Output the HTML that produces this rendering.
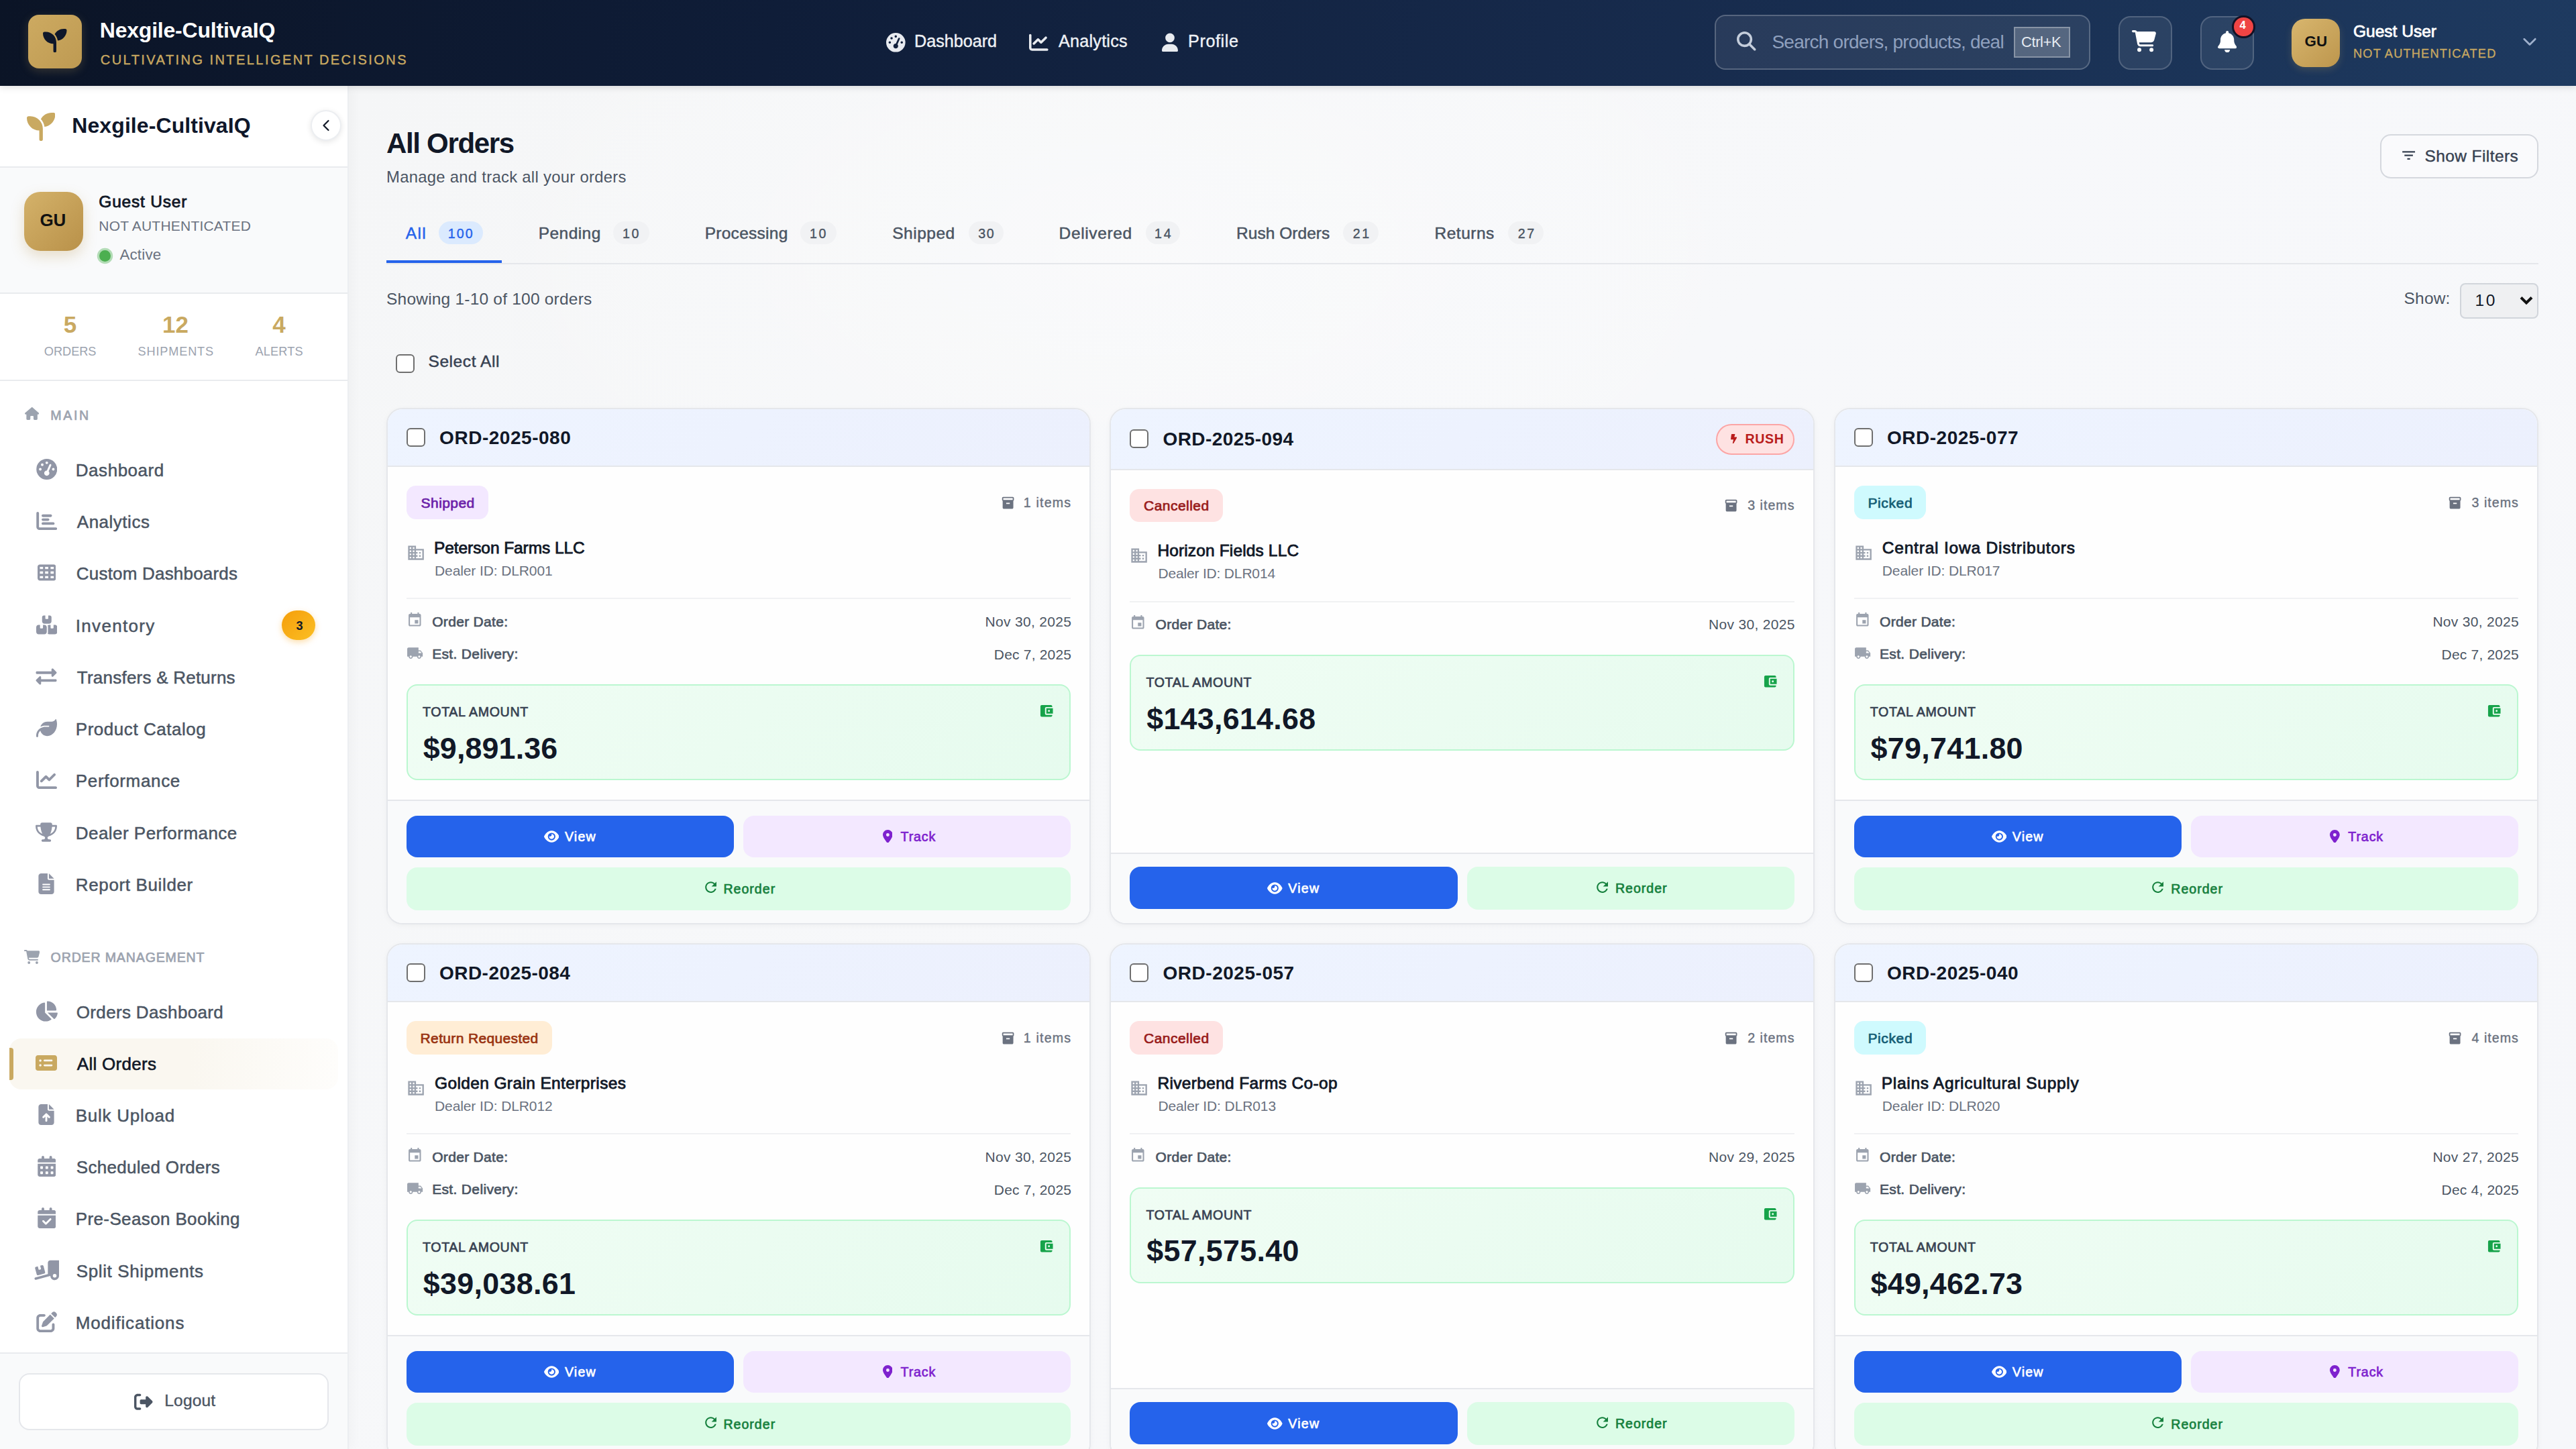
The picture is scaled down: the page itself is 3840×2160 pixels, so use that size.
<!DOCTYPE html>
<html lang="en"><head><meta charset="utf-8"><title>All Orders - Nexgile-CultivaIQ</title>
<style>
*{margin:0;padding:0}
html,body{width:3840px;height:2160px;overflow:hidden;background:#f7f8fa}
body{position:relative;font-family:"Liberation Sans",sans-serif;-webkit-font-smoothing:antialiased}
body div,body svg.ic,body span.t{position:absolute}
span.t{white-space:pre;line-height:1;display:block}
.main-bg{left:518px;top:128px;width:3322px;height:2032px;background:
 radial-gradient(ellipse 1500px 800px at 35% 12%,rgba(255,255,255,.35),rgba(255,255,255,0) 70%),
 linear-gradient(135deg,#f5f6f7 0%,#f7f8fa 45%,#f6f7fa 100%)}
.sidebar{left:0;top:128px;width:518px;height:2032px;background:#fff;border-right:2px solid #eceef1;box-shadow:4px 0 16px rgba(0,0,0,.03)}
.header{left:0;top:0;width:3840px;height:128px;background:linear-gradient(100deg,#0b1426 0%,#0f1d38 30%,#16294a 60%,#1e3a60 100%);box-shadow:0 2px 10px rgba(0,0,0,.13)}
.card{border:2px solid #e5e7eb;border-radius:24px;background:#fefefe;box-sizing:border-box;box-shadow:0 2px 8px rgba(0,0,0,.04)}
.card-hd{border-radius:22px 22px 0 0;background:linear-gradient(135deg,#eef4ff 0%,#ecf0fd 100%)}
.card-ft{border-top:2px solid #e5e7eb;background:#f9fafb;border-radius:0 0 22px 22px;box-sizing:border-box}
.amt{border:2px solid #bbf7d0;border-radius:16px;background:linear-gradient(135deg,#f0fdf4 0%,#e6fbee 100%);box-sizing:border-box}
.btn{border-radius:16px}
</style></head>
<body>
<div class="main-bg"></div>
<div class="sidebar"></div>
<div style="left:0;top:248px;width:518px;height:190px;background:#f9fafb;border-top:2px solid #e9ebee;border-bottom:2px solid #e9ebee;box-sizing:border-box"></div>
<aside>
<svg class="ic" style="left:39.8px;top:167.7px;width:42.4px;height:42.4px;" viewBox="0 0 512 512" preserveAspectRatio="xMidYMid meet"><path fill="#c9a961" fill-rule="nonzero" d="M512 32c0 113.600-84.600 207.500-194.200 222c-7.100-53.400-30.600-101.600-65.300-139.300C290.800 46.300 364 0 448 0h32c17.700 0 32 14.300 32 32zM0 96C0 78.300 14.300 64 32 64H64c123.700 0 224 100.300 224 224v32V480c0 17.700-14.300 32-32 32s-32-14.300-32-32V320C100.300 320 0 219.700 0 96z"/></svg>
<span class="t" style="left:107.30px;top:171.21px;font-size:32px;color:#0f172a;font-weight:700;letter-spacing:0.084px;">Nexgile-CultivaIQ</span>
<div style="left:463px;top:164px;width:46px;height:46px;border-radius:50%;background:#fff;border:2px solid #eceef1;box-shadow:0 2px 8px rgba(0,0,0,.10);box-sizing:border-box"></div>
<svg class="ic" style="left:479px;top:177px;width:14px;height:20px" viewBox="0 0 14 20"><path d="M10.5 3 L3.5 10 L10.5 17" fill="none" stroke="#111827" stroke-width="2.2" stroke-linecap="round" stroke-linejoin="round"/></svg>
<div style="left:36px;top:286px;width:88px;height:88px;border-radius:24px;background:linear-gradient(135deg,#d4b26a 0%,#b99149 100%);box-shadow:0 8px 20px rgba(180,140,60,.25)"></div>
<span class="t" style="left:59.40px;top:314.99px;font-size:26px;color:#111111;font-weight:700;letter-spacing:-0.224px;">GU</span>
<span class="t" style="left:147.30px;top:288.86px;font-size:24.5px;color:#111827;letter-spacing:0.807px;-webkit-text-stroke:0.83px #111827;">Guest User</span>
<span class="t" style="left:147.30px;top:326.12px;font-size:21px;color:#6b7280;letter-spacing:0.212px;">NOT AUTHENTICATED</span>
<div style="left:147.8px;top:373.2px;width:16.8px;height:16.8px;border-radius:50%;background:#4caf50;box-shadow:0 0 0 3.2px rgba(76,175,80,.40)"></div>
<span class="t" style="left:178.40px;top:368.84px;font-size:22.4px;color:#6b7280;letter-spacing:0.176px;">Active</span>
<span class="t" style="left:94.80px;top:466.37px;font-size:35px;color:#c9a961;font-weight:700;">5</span>
<span class="t" style="left:242.07px;top:466.37px;font-size:35px;color:#c9a961;font-weight:700;">12</span>
<span class="t" style="left:406.20px;top:466.37px;font-size:35px;color:#c9a961;font-weight:700;">4</span>
<span class="t" style="left:65.85px;top:514.59px;font-size:18.2px;color:#9ca3af;letter-spacing:-0.036px;">ORDERS</span>
<span class="t" style="left:205.55px;top:514.59px;font-size:18.2px;color:#9ca3af;letter-spacing:0.816px;">SHIPMENTS</span>
<span class="t" style="left:380.60px;top:514.59px;font-size:18.2px;color:#9ca3af;letter-spacing:0.102px;">ALERTS</span>
<div style="left:0;top:566px;width:518px;height:2px;background:#e9ebee"></div>
<svg class="ic" style="left:36.8px;top:606px;width:21.2px;height:21px;" viewBox="0 0 576 512" preserveAspectRatio="xMidYMid meet"><path fill="#9ca3af" fill-rule="nonzero" d="M575.800 255.500c0 18-15 32.100-32 32.100h-32l.7 160.200c0 2.700-.2 5.400-.5 8.100V472c0 22.100-17.900 40-40 40H456c-1.100 0-2.200 0-3.300-.1c-1.400 .1-2.800 .1-4.200 .1H416 392c-22.100 0-40-17.900-40-40V448 384c0-17.700-14.300-32-32-32H256c-17.700 0-32 14.300-32 32v64 24c0 22.100-17.900 40-40 40H160 128.100c-1.500 0-3-.1-4.500-.2c-1.200 .1-2.400 .2-3.600 .2H104c-22.100 0-40-17.900-40-40V360c0-.9 0-1.900 .1-2.800V287.600H32c-18 0-32-14-32-32.100c0-9 3-17 10-24L266.400 8c7-7 15-8 22-8s15 2 21 7L564.800 231.500c8 7 12 15 11 24z"/></svg>
<span class="t" style="left:75.30px;top:609.71px;font-size:19.6px;color:#9ca3af;letter-spacing:2.622px;-webkit-text-stroke:0.67px #9ca3af;">MAIN</span>
<svg class="ic" style="left:53.55px;top:683.8px;width:31.5px;height:31px;" viewBox="0 0 512 512" preserveAspectRatio="xMidYMid meet"><path fill="#9196a6" fill-rule="nonzero" d="M0 256a256 256 0 1 1 512 0A256 256 0 1 1 0 256zM288 96a32 32 0 1 0 -64 0 32 32 0 1 0 64 0zM256 416c35.300 0 64-28.700 64-64c0-17.400-6.900-33.100-18.100-44.600L366 161.700c5.300-12.100-.2-26.300-12.300-31.600s-26.300 .2-31.600 12.300L257.900 288c-.6 0-1.300 0-1.900 0c-35.300 0-64 28.700-64 64s28.700 64 64 64zM176 144a32 32 0 1 0 -64 0 32 32 0 1 0 64 0zM96 288a32 32 0 1 0 0-64 32 32 0 1 0 0 64zm352-32a32 32 0 1 0 -64 0 32 32 0 1 0 64 0z"/></svg>
<span class="t" style="left:112.80px;top:687.89px;font-size:26px;color:#4b5563;letter-spacing:0.533px;-webkit-text-stroke:0.5px #4b5563;">Dashboard</span>
<svg class="ic" style="left:53.55px;top:761.05px;width:31.5px;height:31px;" viewBox="0 0 512 512" preserveAspectRatio="xMidYMid meet"><path fill="#9196a6" fill-rule="nonzero" d="M32 32c17.700 0 32 14.300 32 32V400c0 8.800 7.200 16 16 16H480c17.700 0 32 14.300 32 32s-14.300 32-32 32H80c-44.200 0-80-35.800-80-80V64C0 46.300 14.300 32 32 32zm96 96c0-17.700 14.300-32 32-32l192 0c17.700 0 32 14.300 32 32s-14.300 32-32 32l-192 0c-17.700 0-32-14.300-32-32zm32 64H288c17.700 0 32 14.300 32 32s-14.300 32-32 32H160c-17.700 0-32-14.300-32-32s14.300-32 32-32zm0 96H416c17.700 0 32 14.300 32 32s-14.300 32-32 32H160c-17.700 0-32-14.300-32-32s14.300-32 32-32z"/></svg>
<span class="t" style="left:114.80px;top:765.14px;font-size:26px;color:#4b5563;letter-spacing:0.508px;-webkit-text-stroke:0.5px #4b5563;">Analytics</span>
<svg class="ic" style="left:55.5px;top:838.3px;width:27.6px;height:31px;" viewBox="0 0 512 512" preserveAspectRatio="xMidYMid meet"><path fill="#9196a6" fill-rule="nonzero" d="M64 32C28.700 32 0 60.700 0 96V416c0 35.300 28.700 64 64 64H448c35.300 0 64-28.700 64-64V96c0-35.300-28.700-64-64-64H64zm88 64v64H64V96h88zm56 0h88v64H208V96zm240 0v64H360V96h88zM64 224h88v64H64V224zm232 0v64H208V224h88zm64 0h88v64H360V224zM152 352v64H64V352h88zm56 0h88v64H208V352zm240 0v64H360V352h88z"/></svg>
<span class="t" style="left:113.80px;top:842.39px;font-size:26px;color:#4b5563;letter-spacing:0.200px;-webkit-text-stroke:0.5px #4b5563;">Custom Dashboards</span>
<svg class="ic" style="left:53.55px;top:915.55px;width:31.5px;height:31px;" viewBox="0 0 576 512" preserveAspectRatio="xMidYMid meet"><path fill="#9196a6" fill-rule="nonzero" d="M248 0H208c-26.500 0-48 21.500-48 48V160c0 35.300 28.700 64 64 64H352c35.300 0 64-28.700 64-64V48c0-26.500-21.500-48-48-48H328V80c0 8.800-7.200 16-16 16H264c-8.800 0-16-7.200-16-16V0zM64 256c-35.300 0-64 28.700-64 64V448c0 35.300 28.700 64 64 64H224c35.300 0 64-28.700 64-64V320c0-35.300-28.700-64-64-64H184v80c0 8.800-7.200 16-16 16H120c-8.800 0-16-7.200-16-16V256H64zM352 512H512c35.300 0 64-28.700 64-64V320c0-35.300-28.700-64-64-64H472v80c0 8.800-7.200 16-16 16H408c-8.800 0-16-7.200-16-16V256H352c-15 0-28.800 5.100-39.700 13.800c4.900 10.400 7.700 22 7.700 34.200V464c0 12.200-2.800 23.800-7.700 34.200C323.200 506.900 337 512 352 512z"/></svg>
<span class="t" style="left:112.80px;top:919.64px;font-size:26px;color:#4b5563;letter-spacing:1.307px;-webkit-text-stroke:0.5px #4b5563;">Inventory</span>
<svg class="ic" style="left:53.3px;top:992.8px;width:32px;height:31px;" viewBox="0 0 512 512" preserveAspectRatio="xMidYMid meet"><path fill="#9196a6" fill-rule="nonzero" d="M0 168v-16c0-13.255 10.745-24 24-24h360V80c0-21.367 25.899-32.042 40.971-16.971l80 80c9.372 9.373 9.372 24.569 0 33.941l-80 80C409.956 271.982 384 261.456 384 240v-48H24c-13.255 0-24-10.745-24-24zm488 152H128v-48c0-21.314-25.862-32.080-40.971-16.971l-80 80c-9.372 9.373-9.372 24.569 0 33.941l80 80C102.057 463.997 128 453.437 128 432v-48h360c13.255 0 24-10.745 24-24v-16c0-13.255-10.745-24-24-24z"/></svg>
<span class="t" style="left:114.80px;top:996.89px;font-size:26px;color:#4b5563;letter-spacing:0.230px;-webkit-text-stroke:0.5px #4b5563;">Transfers &amp; Returns</span>
<svg class="ic" style="left:53.8px;top:1070.05px;width:31px;height:31px;" viewBox="0 0 512 512" preserveAspectRatio="xMidYMid meet"><path fill="#9196a6" fill-rule="nonzero" d="M272 96c-78.600 0-145.100 51.500-167.700 122.500c33.600-17 71.500-26.500 111.700-26.500h88c8.800 0 16 7.200 16 16s-7.200 16-16 16H288 216s0 0 0 0c-16.600 0-32.700 1.900-48.300 5.400c-25.900 5.900-49.900 16.400-71.400 30.700c0 0 0 0 0 0C38.300 298.800 0 364.900 0 440v16c0 13.300 10.700 24 24 24s24-10.700 24-24V440c0-48.700 20.700-92.500 53.800-123.200C121.600 392.300 190.300 448 272 448l1 0c132.100-.7 239-130.900 239-291.400c0-42.600-7.500-83.100-21.100-119.600c-2.600-6.900-12.700-6.600-16.200-.1C455.900 72.100 418.700 96 376 96L272 96z"/></svg>
<span class="t" style="left:112.80px;top:1074.14px;font-size:26px;color:#4b5563;letter-spacing:0.537px;-webkit-text-stroke:0.5px #4b5563;">Product Catalog</span>
<svg class="ic" style="left:53.8px;top:1147.3px;width:31px;height:31px;" viewBox="0 0 512 512" preserveAspectRatio="xMidYMid meet"><path fill="#9196a6" fill-rule="nonzero" d="M64 64c0-17.700-14.300-32-32-32S0 46.300 0 64V400c0 44.200 35.800 80 80 80H480c17.700 0 32-14.300 32-32s-14.300-32-32-32H80c-8.800 0-16-7.200-16-16V64zm406.600 86.600c12.500-12.500 12.500-32.800 0-45.300s-32.800-12.500-45.300 0L320 210.700l-57.400-57.400c-12.500-12.500-32.800-12.500-45.300 0l-112 112c-12.500 12.500-12.500 32.800 0 45.300s32.800 12.500 45.300 0L240 221.300l57.400 57.400c12.500 12.500 32.800 12.500 45.300 0l128-128z"/></svg>
<span class="t" style="left:112.80px;top:1151.39px;font-size:26px;color:#4b5563;letter-spacing:0.662px;-webkit-text-stroke:0.5px #4b5563;">Performance</span>
<svg class="ic" style="left:53.3px;top:1224.55px;width:32px;height:31px;" viewBox="0 0 576 512" preserveAspectRatio="xMidYMid meet"><path fill="#9196a6" fill-rule="nonzero" d="M400 0H176c-26.500 0-48.100 21.800-47.100 48.200c.2 5.300 .4 10.600 .7 15.800H24C10.700 64 0 74.700 0 88c0 92.600 33.500 157 78.500 200.700c44.300 43.100 98.300 64.800 138.100 75.800c23.400 6.500 39.400 26 39.400 45.600c0 20.900-17 37.900-37.900 37.900H192c-17.700 0-32 14.300-32 32s14.300 32 32 32H384c17.700 0 32-14.300 32-32s-14.300-32-32-32H357.900C337 448 320 431 320 410.100c0-19.600 15.900-39.200 39.400-45.600c39.900-11 93.900-32.700 138.200-75.800C542.500 245 576 180.600 576 88c0-13.300-10.700-24-24-24H446.400c.3-5.200 .5-10.400 .7-15.800C448.100 21.800 426.500 0 400 0zM48.900 112h84.400c9.100 90.100 29.200 150.300 51.900 190.600c-24.900-11-50.800-26.500-73.200-48.300c-32-31.100-58-76-63-142.300zM464.100 254.300c-22.400 21.800-48.300 37.300-73.200 48.300c22.700-40.300 42.800-100.500 51.900-190.600h84.400c-5.100 66.300-31.100 111.200-63 142.300z"/></svg>
<span class="t" style="left:112.80px;top:1228.64px;font-size:26px;color:#4b5563;letter-spacing:0.459px;-webkit-text-stroke:0.5px #4b5563;">Dealer Performance</span>
<svg class="ic" style="left:57.3px;top:1301.8px;width:24px;height:31px;" viewBox="0 0 384 512" preserveAspectRatio="xMidYMid meet"><path fill="#9196a6" fill-rule="nonzero" d="M64 0C28.700 0 0 28.700 0 64V448c0 35.300 28.700 64 64 64H320c35.300 0 64-28.700 64-64V160H256c-17.700 0-32-14.300-32-32V0H64zM256 0V128H384L256 0zM112 256H272c8.800 0 16 7.200 16 16s-7.200 16-16 16H112c-8.800 0-16-7.200-16-16s7.200-16 16-16zm0 64H272c8.800 0 16 7.200 16 16s-7.200 16-16 16H112c-8.800 0-16-7.200-16-16s7.200-16 16-16zm0 64H272c8.800 0 16 7.200 16 16s-7.200 16-16 16H112c-8.800 0-16-7.200-16-16s7.200-16 16-16z"/></svg>
<span class="t" style="left:112.80px;top:1305.89px;font-size:26px;color:#4b5563;letter-spacing:0.636px;-webkit-text-stroke:0.5px #4b5563;">Report Builder</span>
<div style="left:420.2px;top:910px;width:49.7px;height:43.7px;border-radius:22px;background:linear-gradient(135deg,#f59e0b,#fbbf24);box-shadow:0 3px 10px rgba(245,158,11,.35)"></div>
<span class="t" style="left:441.50px;top:923.79px;font-size:18.2px;color:#111827;font-weight:700;">3</span>
<svg class="ic" style="left:35.5px;top:1416px;width:23.5px;height:21px;" viewBox="0 0 576 512" preserveAspectRatio="xMidYMid meet"><path fill="#9ca3af" fill-rule="nonzero" d="M0 24C0 10.700 10.700 0 24 0H69.500c22 0 41.500 12.800 50.600 32h411c26.300 0 45.500 25 38.600 50.400l-41 152.300c-8.500 31.400-37 53.300-69.500 53.300H170.700l5.400 28.500c2.200 11.300 12.100 19.500 23.600 19.500H488c13.300 0 24 10.700 24 24s-10.700 24-24 24H199.700c-34.600 0-64.300-24.600-70.700-58.500L77.400 54.500c-.7-3.800-4-6.500-7.900-6.500H24C10.700 48 0 37.300 0 24zM128 464a48 48 0 1 1 96 0 48 48 0 1 1 -96 0zm336-48a48 48 0 1 1 0 96 48 48 0 1 1 0-96z"/></svg>
<span class="t" style="left:75.60px;top:1417.61px;font-size:19.6px;color:#9ca3af;letter-spacing:0.822px;-webkit-text-stroke:0.67px #9ca3af;">ORDER MANAGEMENT</span>
<svg class="ic" style="left:52.3px;top:1492px;width:34px;height:31px;" viewBox="0 0 576 512" preserveAspectRatio="xMidYMid meet"><path fill="#9196a6" fill-rule="nonzero" d="M304 240V16.600c0-9 7-16.600 16-16.600C443.700 0 544 100.300 544 224c0 9-7.600 16-16.600 16H304zM32 272C32 150.700 122.100 50.300 239 34.300c9.200-1.300 17 6.100 17 15.400V288L412.500 444.500c6.700 6.700 6.200 17.700-1.500 23.100C371.800 495.600 323.800 512 272 512C139.500 512 32 404.600 32 272zm526.400 16c9.300 0 16.600 7.800 15.400 17c-7.700 55.900-34.600 105.600-73.900 142.300c-6 5.600-15.400 5.200-21.200-.7L320 288H558.400z"/></svg>
<span class="t" style="left:113.80px;top:1496.09px;font-size:26px;color:#4b5563;letter-spacing:0.339px;-webkit-text-stroke:0.5px #4b5563;">Orders Dashboard</span>
<div style="left:14px;top:1548px;width:490px;height:76px;border-radius:18px;background:linear-gradient(90deg,#faf7f0 0%,#faf7f0 55%,#fefdfb 100%)"></div>
<div style="left:14px;top:1561.9px;width:6px;height:48px;border-radius:0 4px 4px 0;background:#c9a961"></div>
<svg class="ic" style="left:53.3px;top:1569.1px;width:32px;height:31px;" viewBox="0 0 576 512" preserveAspectRatio="xMidYMid meet"><path fill="#c9a961" fill-rule="evenodd" d="M64 48H512c35.3 0 64 28.7 64 64V400c0 35.3-28.7 64-64 64H64c-35.3 0-64-28.7-64-64V112C0 76.7 28.7 48 64 48zM128 160a32 32 0 1 0 0 64 32 32 0 1 0 0-64zM128 288a32 32 0 1 0 0 64 32 32 0 1 0 0-64zM240 168a24 24 0 0 0 0 48H432a24 24 0 0 0 0-48H240zM240 296a24 24 0 0 0 0 48H432a24 24 0 0 0 0-48H240z"/></svg>
<span class="t" style="left:114.80px;top:1573.19px;font-size:26px;color:#111827;letter-spacing:0.291px;-webkit-text-stroke:0.6px #111827;">All Orders</span>
<svg class="ic" style="left:57.3px;top:1646.2px;width:24px;height:31px;" viewBox="0 0 384 512" preserveAspectRatio="xMidYMid meet"><path fill="#9196a6" fill-rule="nonzero" d="M64 0C28.700 0 0 28.700 0 64V448c0 35.300 28.700 64 64 64H320c35.300 0 64-28.700 64-64V160H256c-17.700 0-32-14.300-32-32V0H64zM256 0V128H384L256 0zM216 408c0 13.300-10.700 24-24 24s-24-10.700-24-24V305.900l-31 31c-9.400 9.400-24.600 9.400-33.900 0s-9.400-24.600 0-33.900l72-72c9.400-9.400 24.600-9.400 33.900 0l72 72c9.400 9.400 9.400 24.600 0 33.900s-24.600 9.400-33.900 0l-31-31V408z"/></svg>
<span class="t" style="left:112.80px;top:1650.29px;font-size:26px;color:#4b5563;letter-spacing:0.727px;-webkit-text-stroke:0.5px #4b5563;">Bulk Upload</span>
<svg class="ic" style="left:55.5px;top:1723.3px;width:27.6px;height:31px;" viewBox="0 0 448 512" preserveAspectRatio="xMidYMid meet"><path fill="#9196a6" fill-rule="nonzero" d="M128 0c17.700 0 32 14.300 32 32V64H288V32c0-17.700 14.300-32 32-32s32 14.300 32 32V64h48c26.500 0 48 21.500 48 48v48H0V112C0 85.500 21.500 64 48 64H96V32c0-17.700 14.300-32 32-32zM0 192H448V464c0 26.500-21.500 48-48 48H48c-26.500 0-48-21.500-48-48V192zm64 80v32c0 8.800 7.200 16 16 16h32c8.800 0 16-7.200 16-16V272c0-8.800-7.200-16-16-16H80c-8.800 0-16 7.200-16 16zm128 0v32c0 8.800 7.200 16 16 16h32c8.800 0 16-7.200 16-16V272c0-8.800-7.200-16-16-16H208c-8.800 0-16 7.200-16 16zm144-16c-8.800 0-16 7.200-16 16v32c0 8.800 7.200 16 16 16h32c8.800 0 16-7.200 16-16V272c0-8.800-7.200-16-16-16H336zM64 400v32c0 8.800 7.200 16 16 16h32c8.800 0 16-7.200 16-16V400c0-8.800-7.200-16-16-16H80c-8.800 0-16 7.200-16 16zm144-16c-8.800 0-16 7.200-16 16v32c0 8.800 7.200 16 16 16h32c8.800 0 16-7.200 16-16V400c0-8.800-7.200-16-16-16H208zm112 16v32c0 8.800 7.200 16 16 16h32c8.800 0 16-7.200 16-16V400c0-8.800-7.200-16-16-16H336c-8.800 0-16 7.200-16 16z"/></svg>
<span class="t" style="left:113.80px;top:1727.39px;font-size:26px;color:#4b5563;letter-spacing:0.296px;-webkit-text-stroke:0.5px #4b5563;">Scheduled Orders</span>
<svg class="ic" style="left:55.5px;top:1800.4px;width:27.6px;height:31px;" viewBox="0 0 448 512" preserveAspectRatio="xMidYMid meet"><path fill="#9196a6" fill-rule="nonzero" d="M128 0c17.700 0 32 14.300 32 32V64H288V32c0-17.700 14.300-32 32-32s32 14.300 32 32V64h48c26.500 0 48 21.500 48 48v48H0V112C0 85.500 21.500 64 48 64H96V32c0-17.700 14.300-32 32-32zM0 192H448V464c0 26.500-21.500 48-48 48H48c-26.500 0-48-21.500-48-48V192zM329 305c9.400-9.400 9.400-24.600 0-33.900s-24.600-9.400-33.900 0l-95 95-47-47c-9.400-9.400-24.600-9.400-33.900 0s-9.400 24.600 0 33.900l64 64c9.400 9.400 24.600 9.400 33.900 0L329 305z"/></svg>
<span class="t" style="left:112.80px;top:1804.49px;font-size:26px;color:#4b5563;letter-spacing:0.369px;-webkit-text-stroke:0.5px #4b5563;">Pre-Season Booking</span>
<svg class="ic" style="left:50.8px;top:1877.5px;width:37px;height:31px;" viewBox="0 0 640 512" preserveAspectRatio="xMidYMid meet"><path fill="#9196a6" fill-rule="nonzero" d="M640 0V400c0 61.900-50.100 112-112 112c-61 0-110.500-48.700-112-109.300L48.400 502.900c-17.100 4.600-34.600-5.400-39.300-22.500s5.400-34.600 22.500-39.300L352 353.800V64c0-35.300 28.700-64 64-64H640zM576 400a48 48 0 1 0 -96 0 48 48 0 1 0 96 0zM23.100 207.700c-4.600-17.100 5.600-34.600 22.600-39.200l46.400-12.400 20.700 77.300c2.300 8.500 11.100 13.600 19.600 11.300l30.900-8.300c8.500-2.300 13.600-11.100 11.300-19.600l-20.700-77.300 46.400-12.400c17.100-4.600 34.600 5.600 39.200 22.600l41.400 154.500c4.600 17.100-5.600 34.600-22.600 39.200L103.700 384.900c-17.100 4.600-34.600-5.600-39.200-22.600L23.100 207.700z"/></svg>
<span class="t" style="left:113.80px;top:1881.59px;font-size:26px;color:#4b5563;letter-spacing:0.618px;-webkit-text-stroke:0.5px #4b5563;">Split Shipments</span>
<svg class="ic" style="left:53.55px;top:1954.6px;width:31.5px;height:31px;" viewBox="0 0 512 512" preserveAspectRatio="xMidYMid meet"><path fill="#9196a6" fill-rule="nonzero" d="M471.600 21.700c-21.900-21.900-57.300-21.900-79.200 0L362.300 51.700l97.900 97.900 30.100-30.100c21.900-21.900 21.900-57.300 0-79.200L471.600 21.700zm-299.200 220c-6.100 6.100-10.800 13.600-13.500 21.900l-29.600 88.800c-2.900 8.600-.6 18.100 5.800 24.600s15.900 8.700 24.600 5.800l88.800-29.600c8.200-2.700 15.700-7.400 21.900-13.500L437.700 172.300 339.700 74.300 172.400 241.700zM96 64C43 64 0 107 0 160V416c0 53 43 96 96 96H352c53 0 96-43 96-96V320c0-17.700-14.300-32-32-32s-32 14.300-32 32v96c0 17.700-14.300 32-32 32H96c-17.700 0-32-14.300-32-32V160c0-17.700 14.300-32 32-32h96c17.700 0 32-14.300 32-32s-14.300-32-32-32H96z"/></svg>
<span class="t" style="left:112.80px;top:1958.69px;font-size:26px;color:#4b5563;letter-spacing:0.822px;-webkit-text-stroke:0.5px #4b5563;">Modifications</span>
<div style="left:0;top:2016px;width:518px;height:144px;background:#f9fafb;border-top:2px solid #e9ebee;box-sizing:border-box"></div>
<div style="left:28px;top:2047px;width:462px;height:85px;background:#fff;border:2px solid #e5e7eb;border-radius:16px;box-sizing:border-box"></div>
<svg class="ic" style="left:200px;top:2076px;width:27.5px;height:27.5px;" viewBox="0 0 512 512" preserveAspectRatio="xMidYMid meet"><path fill="#4b5563" fill-rule="nonzero" d="M377.900 105.900L500.700 228.700c7.200 7.200 11.300 17.100 11.300 27.300s-4.100 20.100-11.300 27.300L377.900 406.100c-6.400 6.400-15 9.900-24 9.900c-18.700 0-33.900-15.200-33.900-33.900l0-62.100-128 0c-17.700 0-32-14.300-32-32l0-64c0-17.700 14.300-32 32-32l128 0 0-62.100c0-18.700 15.200-33.900 33.900-33.900c9 0 17.600 3.600 24 9.900zM160 96L96 96c-17.700 0-32 14.300-32 32l0 256c0 17.700 14.300 32 32 32l64 0c17.700 0 32 14.300 32 32s-14.300 32-32 32l-64 0c-53 0-96-43-96-96L0 128C0 75 43 32 96 32l64 0c17.700 0 32 14.300 32 32s-14.300 32-32 32z"/></svg>
<span class="t" style="left:245.30px;top:2075.56px;font-size:24.5px;color:#4b5563;letter-spacing:0.174px;-webkit-text-stroke:0.4px #4b5563;">Logout</span>
</aside>
<main>
<span class="t" style="left:576.00px;top:192.65px;font-size:42px;color:#111827;font-weight:700;letter-spacing:-1.323px;">All Orders</span>
<span class="t" style="left:576.00px;top:251.65px;font-size:23.8px;color:#4b5563;letter-spacing:0.307px;">Manage and track all your orders</span>
<div style="left:3548px;top:200px;width:236px;height:66px;border:2px solid #d5d8de;border-radius:16px;background:rgba(255,255,255,.35);box-sizing:border-box"></div>
<svg class="ic" style="left:3577.6px;top:218.7px;width:25.2px;height:25.2px;" viewBox="0 0 24 24" preserveAspectRatio="xMidYMid meet"><path fill="#374151" fill-rule="nonzero" d="M10 18h4v-2h-4v2zM3 6v2h18V6H3zm3 7h12v-2H6v2z"/></svg>
<span class="t" style="left:3614.50px;top:220.76px;font-size:24.5px;color:#374151;letter-spacing:0.406px;-webkit-text-stroke:0.4px #374151;">Show Filters</span>
<div style="left:576px;top:392px;width:3208px;height:2px;background:#e5e7eb"></div>
<div style="left:576px;top:388px;width:172px;height:4px;background:#2563eb"></div>
<span class="t" style="left:604.70px;top:335.56px;font-size:24.5px;color:#2563eb;letter-spacing:1.408px;-webkit-text-stroke:0.5px #2563eb;">All</span>
<div style="left:653.9px;top:330.2px;width:65.9px;height:33.5px;border-radius:17px;background:#dbeafe"></div>
<span class="t" style="left:667.85px;top:338.81px;font-size:19.6px;color:#2563eb;letter-spacing:2.103px;-webkit-text-stroke:0.4px #2563eb;">100</span>
<span class="t" style="left:802.70px;top:335.56px;font-size:24.5px;color:#4b5563;letter-spacing:0.452px;-webkit-text-stroke:0.5px #4b5563;">Pending</span>
<div style="left:914px;top:330.2px;width:53.5px;height:33.5px;border-radius:17px;background:#f1f2f4"></div>
<span class="t" style="left:927.95px;top:338.81px;font-size:19.6px;color:#4b5563;letter-spacing:2.703px;-webkit-text-stroke:0.4px #4b5563;">10</span>
<span class="t" style="left:1050.70px;top:335.56px;font-size:24.5px;color:#4b5563;letter-spacing:0.270px;-webkit-text-stroke:0.5px #4b5563;">Processing</span>
<div style="left:1193px;top:330.2px;width:53.5px;height:33.5px;border-radius:17px;background:#f1f2f4"></div>
<span class="t" style="left:1206.95px;top:338.81px;font-size:19.6px;color:#4b5563;letter-spacing:2.703px;-webkit-text-stroke:0.4px #4b5563;">10</span>
<span class="t" style="left:1330.20px;top:335.56px;font-size:24.5px;color:#4b5563;letter-spacing:0.519px;-webkit-text-stroke:0.5px #4b5563;">Shipped</span>
<div style="left:1444px;top:330.2px;width:52px;height:33.5px;border-radius:17px;background:#f1f2f4"></div>
<span class="t" style="left:1458.20px;top:338.81px;font-size:19.6px;color:#4b5563;letter-spacing:1.703px;-webkit-text-stroke:0.4px #4b5563;">30</span>
<span class="t" style="left:1578.60px;top:335.56px;font-size:24.5px;color:#4b5563;letter-spacing:0.642px;-webkit-text-stroke:0.5px #4b5563;">Delivered</span>
<div style="left:1708.3px;top:330.2px;width:51.2px;height:33.5px;border-radius:17px;background:#f1f2f4"></div>
<span class="t" style="left:1721.10px;top:338.81px;font-size:19.6px;color:#4b5563;letter-spacing:2.703px;-webkit-text-stroke:0.4px #4b5563;">14</span>
<span class="t" style="left:1843.00px;top:335.56px;font-size:24.5px;color:#4b5563;letter-spacing:0.037px;-webkit-text-stroke:0.5px #4b5563;">Rush Orders</span>
<div style="left:2002px;top:330.2px;width:53px;height:33.5px;border-radius:17px;background:#f1f2f4"></div>
<span class="t" style="left:2016.70px;top:338.81px;font-size:19.6px;color:#4b5563;letter-spacing:2.703px;-webkit-text-stroke:0.4px #4b5563;">21</span>
<span class="t" style="left:2138.60px;top:335.56px;font-size:24.5px;color:#4b5563;letter-spacing:0.477px;-webkit-text-stroke:0.5px #4b5563;">Returns</span>
<div style="left:2248px;top:330.2px;width:53px;height:33.5px;border-radius:17px;background:#f1f2f4"></div>
<span class="t" style="left:2262.70px;top:338.81px;font-size:19.6px;color:#4b5563;letter-spacing:2.703px;-webkit-text-stroke:0.4px #4b5563;">27</span>
<span class="t" style="left:576.00px;top:433.66px;font-size:24.5px;color:#4b5563;letter-spacing:0.210px;">Showing 1-10 of 100 orders</span>
<span class="t" style="left:3583.60px;top:432.76px;font-size:24.5px;color:#4b5563;letter-spacing:0.179px;">Show:</span>
<div style="left:3666.6px;top:422.4px;width:117px;height:52.8px;border:2px solid #d1d5db;border-radius:8px;background:#eff0f2;box-sizing:border-box"></div>
<span class="t" style="left:3689.40px;top:436.26px;font-size:24.5px;color:#111827;letter-spacing:2.774px;">10</span>
<svg class="ic" style="left:3755px;top:440px;width:22px;height:16px" viewBox="0 0 22 16"><path d="M3 3.5 L11 11.5 L19 3.5" fill="none" stroke="#111" stroke-width="4" stroke-linecap="butt" stroke-linejoin="miter"/></svg>
<div style="left:590px;top:527.5px;width:28px;height:28px;border:2.3px solid #6f6f6f;border-radius:6px;background:#fff;box-sizing:border-box"></div>
<span class="t" style="left:638.50px;top:527.26px;font-size:24.5px;color:#374151;letter-spacing:0.568px;-webkit-text-stroke:0.5px #374151;">Select All</span>
<article>
<div class="card" style="left:576px;top:608px;width:1050.3px;height:770px"></div>
<div class="card-hd" style="left:578px;top:610px;width:1046.3px;height:84.3px"></div>
<div style="left:578px;top:694.3px;width:1046.3px;height:2px;background:#e5e7eb"></div>
<div style="left:606px;top:637.65px;width:28px;height:28px;border:2.3px solid #6f6f6f;border-radius:6px;background:#fff;box-sizing:border-box"></div>
<span class="t" style="left:655.10px;top:638.65px;font-size:28px;color:#111827;font-weight:700;letter-spacing:0.527px;">ORD-2025-080</span>
<div style="left:606px;top:724.3px;width:122px;height:49.7px;border-radius:14px;background:#f3e8ff"></div>
<span class="t" style="left:627.60px;top:738.72px;font-size:21px;color:#6b21a8;letter-spacing:0.435px;-webkit-text-stroke:0.71px #6b21a8;">Shipped</span>
<span class="t" style="left:1525.80px;top:740.11px;font-size:19.6px;color:#6b7280;letter-spacing:1.191px;-webkit-text-stroke:0.4px #6b7280;">1 items</span>
<svg class="ic" style="left:1491.6px;top:738.5px;width:21.2px;height:21.2px;" viewBox="0 0 24 24" preserveAspectRatio="xMidYMid meet"><path fill="#6b7280" fill-rule="nonzero" d="M20 2H4c-1 0-2 .9-2 2v3.010c0 .72.43 1.340 1 1.690V20c0 1.100 1.100 2 2 2h14c.9 0 2-.9 2-2V8.700c.57-.35 1-.97 1-1.690V4c0-1.100-1-2-2-2zm-5 12H9v-2h6v2zm5-7H4V4h16v3z"/></svg>
<svg class="ic" style="left:605.7px;top:809.9px;width:28.2px;height:28.2px;" viewBox="0 0 24 24" preserveAspectRatio="xMidYMid meet"><path fill="#9ca3af" fill-rule="nonzero" d="M12 7V3H2v18h20V7H12zM6 19H4v-2h2v2zm0-4H4v-2h2v2zm0-4H4V9h2v2zm0-4H4V5h2v2zm4 12H8v-2h2v2zm0-4H8v-2h2v2zm0-4H8V9h2v2zm0-4H8V5h2v2zm10 12h-8v-2h2v-2h-2v-2h2v-2h-2V9h8v10zm-2-8h-2v2h2v-2zm0 4h-2v2h2v-2z"/></svg>
<span class="t" style="left:647.00px;top:804.76px;font-size:24.5px;color:#111827;letter-spacing:-0.078px;-webkit-text-stroke:0.83px #111827;">Peterson Farms LLC</span>
<span class="t" style="left:648.00px;top:840.02px;font-size:21px;color:#6b7280;letter-spacing:-0.108px;">Dealer ID: DLR001</span>
<div style="left:606px;top:891.3px;width:990.3px;height:2px;background:#f0f1f3"></div>
<svg class="ic" style="left:605.9px;top:911.5px;width:24.6px;height:24.6px;" viewBox="0 0 24 24" preserveAspectRatio="xMidYMid meet"><path fill="#9ca3af" fill-rule="nonzero" d="M17 12h-5v5h5v-5zM16 1v2H8V1H6v2H5c-1.110 0-1.990.9-1.990 2L3 19c0 1.100.89 2 2 2h14c1.100 0 2-.9 2-2V5c0-1.100-.9-2-2-2h-1V1h-2zm3 18H5V8h14v11z"/></svg>
<span class="t" style="left:644.20px;top:915.62px;font-size:21px;color:#4b5563;letter-spacing:0.313px;-webkit-text-stroke:0.71px #4b5563;">Order Date:</span>
<span class="t" style="left:1468.60px;top:916.02px;font-size:21px;color:#4b5563;letter-spacing:0.314px;">Nov 30, 2025</span>
<svg class="ic" style="left:605.8px;top:960.8px;width:25.2px;height:25.2px;" viewBox="0 0 24 24" preserveAspectRatio="xMidYMid meet"><path fill="#9ca3af" fill-rule="nonzero" d="M20 8h-3V4H3c-1.100 0-2 .9-2 2v11h2c0 1.660 1.340 3 3 3s3-1.340 3-3h6c0 1.660 1.340 3 3 3s3-1.340 3-3h2v-5l-3-4zM6 18.500c-.83 0-1.500-.67-1.500-1.500s.67-1.500 1.500-1.500 1.500.67 1.500 1.500-.67 1.500-1.500 1.500zm13.500-9l1.960 2.500H17V9.500h2.500zm-1.500 9c-.83 0-1.500-.67-1.500-1.500s.67-1.500 1.500-1.500 1.500.67 1.500 1.500-.67 1.500-1.500 1.500z"/></svg>
<span class="t" style="left:644.20px;top:964.12px;font-size:21px;color:#4b5563;letter-spacing:0.334px;-webkit-text-stroke:0.71px #4b5563;">Est. Delivery:</span>
<span class="t" style="left:1481.80px;top:964.52px;font-size:21px;color:#4b5563;letter-spacing:0.194px;">Dec 7, 2025</span>
<div class="amt" style="left:606px;top:1020.4px;width:990.3px;height:142.8px"></div>
<span class="t" style="left:630.00px;top:1052.41px;font-size:19.6px;color:#374151;letter-spacing:0.663px;-webkit-text-stroke:0.67px #374151;">TOTAL AMOUNT</span>
<svg class="ic" style="left:1548.3px;top:1048.4px;width:23.5px;height:23.5px;" viewBox="0 0 24 24" preserveAspectRatio="xMidYMid meet"><path fill="#16a34a" fill-rule="nonzero" d="M21 18v1c0 1.100-.9 2-2 2H5c-1.110 0-2-.9-2-2V5c0-1.100.89-2 2-2h14c1.100 0 2 .9 2 2v1h-9c-1.110 0-2 .9-2 2v8c0 1.100.89 2 2 2h9zm-9-2h10V8H12v8zm4-2.500c-.83 0-1.500-.67-1.500-1.500s.67-1.500 1.500-1.500 1.500.67 1.500 1.500-.67 1.500-1.500 1.500z"/></svg>
<span class="t" style="left:630.80px;top:1092.98px;font-size:44.8px;color:#111827;font-weight:700;letter-spacing:0.141px;">$9,891.36</span>
<div class="card-ft" style="left:578px;top:1191.5px;width:1046.3px;height:184.5px"></div>
<div class="btn" style="left:606px;top:1216.4px;width:488.15px;height:61.6px;background:#2563eb"></div>
<svg class="ic" style="left:810.775px;top:1236.9px;width:22.6px;height:20px;" viewBox="0 0 576 512" preserveAspectRatio="xMidYMid meet"><path fill="#ffffff" fill-rule="nonzero" d="M288 32c-80.800 0-145.500 36.800-192.600 80.600C48.600 156 17.300 208 2.500 243.700c-3.300 7.900-3.300 16.700 0 24.600C17.300 304 48.600 356 95.400 399.400C142.500 443.200 207.200 480 288 480s145.500-36.800 192.600-80.600c46.800-43.500 78.100-95.400 93-131.100c3.300-7.900 3.300-16.700 0-24.600c-14.900-35.700-46.200-87.700-93-131.100C433.500 68.800 368.800 32 288 32zM144 256a144 144 0 1 1 288 0 144 144 0 1 1 -288 0zm144-64c0 35.300-28.700 64-64 64c-7.100 0-13.900-1.200-20.300-3.300c-5.500-1.800-11.900 1.600-11.700 7.400c.3 6.900 1.300 13.800 3.200 20.700c13.700 51.200 66.400 81.600 117.600 67.900s81.600-66.400 67.900-117.600c-11.100-41.500-47.800-69.400-88.600-71.100c-5.800-.2-9.200 6.100-7.400 11.700c2.100 6.400 3.300 13.200 3.300 20.300z"/></svg>
<span class="t" style="left:841.88px;top:1238.21px;font-size:19.6px;color:#ffffff;letter-spacing:1.245px;-webkit-text-stroke:0.67px #ffffff;">View</span>
<div class="btn" style="left:1108.15px;top:1216.4px;width:488.15px;height:61.6px;background:#f3e8ff"></div>
<svg class="ic" style="left:1315.53px;top:1236.7px;width:14.8px;height:19.8px;" viewBox="0 0 384 512" preserveAspectRatio="xMidYMid meet"><path fill="#7e22ce" fill-rule="nonzero" d="M215.700 499.200C267 435 384 279.400 384 192C384 86 298 0 192 0S0 86 0 192c0 87.400 117 243 168.300 307.200c12.300 15.300 35.100 15.300 47.400 0zM192 128a64 64 0 1 1 0 128 64 64 0 1 1 0-128z"/></svg>
<span class="t" style="left:1342.53px;top:1238.21px;font-size:19.6px;color:#7e22ce;letter-spacing:0.885px;-webkit-text-stroke:0.67px #7e22ce;">Track</span>
<div class="btn" style="left:606px;top:1292.7px;width:990.3px;height:64px;background:#dcfce7"></div>
<svg class="ic" style="left:1046.55px;top:1309.8px;width:25.2px;height:25.2px;" viewBox="0 0 24 24" preserveAspectRatio="xMidYMid meet"><path fill="#15803d" fill-rule="nonzero" d="M17.65 6.350C16.200 4.900 14.210 4 12 4c-4.420 0-7.990 3.580-7.990 8s3.570 8 7.990 8c3.730 0 6.840-2.550 7.730-6h-2.080c-.82 2.330-3.040 4-5.650 4-3.310 0-6-2.690-6-6s2.690-6 6-6c1.660 0 3.140.69 4.220 1.780L13 11h7V4l-2.350 2.350z"/></svg>
<span class="t" style="left:1078.45px;top:1315.61px;font-size:19.6px;color:#15803d;letter-spacing:0.989px;-webkit-text-stroke:0.67px #15803d;">Reorder</span>
</article>
<article>
<div class="card" style="left:1654.4px;top:608px;width:1050.3px;height:770px"></div>
<div class="card-hd" style="left:1656.4px;top:610px;width:1046.3px;height:88.5px"></div>
<div style="left:1656.4px;top:698.5px;width:1046.3px;height:2px;background:#e5e7eb"></div>
<div style="left:1684.4px;top:639.75px;width:28px;height:28px;border:2.3px solid #6f6f6f;border-radius:6px;background:#fff;box-sizing:border-box"></div>
<span class="t" style="left:1733.50px;top:640.75px;font-size:28px;color:#111827;font-weight:700;letter-spacing:0.436px;">ORD-2025-094</span>
<div style="left:2557.7px;top:631.55px;width:117px;height:46.5px;border-radius:23.5px;background:#fee2e2;border:2px solid #fca5a5;box-sizing:border-box"></div>
<svg class="ic" style="left:2579.9px;top:646.75px;width:9.2px;height:14.6px;" viewBox="0 0 320 512" preserveAspectRatio="xMidYMid meet"><path fill="#b91c1c" fill-rule="nonzero" d="M296 160H180.6l42.6-129.8C227.2 15 215.7 0 200 0H56C44 0 33.8 8.9 32.2 20.8l-32 240C-1.7 275.2 9.5 288 24 288h118.7L96.6 482.5c-3.6 15.2 8 29.5 23.3 29.5 8.4 0 16.4-4.4 20.8-12l176-304c9.3-15.9-2.2-36-20.7-36z"/></svg>
<span class="t" style="left:2601.40px;top:645.26px;font-size:19.6px;color:#b91c1c;font-weight:700;letter-spacing:0.677px;">RUSH</span>
<div style="left:1684.4px;top:728.5px;width:138.5px;height:49.7px;border-radius:14px;background:#fee2e2"></div>
<span class="t" style="left:1705.00px;top:742.92px;font-size:21px;color:#991b1b;letter-spacing:0.473px;-webkit-text-stroke:0.71px #991b1b;">Cancelled</span>
<span class="t" style="left:2605.20px;top:744.31px;font-size:19.6px;color:#6b7280;letter-spacing:1.024px;-webkit-text-stroke:0.4px #6b7280;">3 items</span>
<svg class="ic" style="left:2570px;top:742.7px;width:21.2px;height:21.2px;" viewBox="0 0 24 24" preserveAspectRatio="xMidYMid meet"><path fill="#6b7280" fill-rule="nonzero" d="M20 2H4c-1 0-2 .9-2 2v3.010c0 .72.43 1.340 1 1.690V20c0 1.100 1.100 2 2 2h14c.9 0 2-.9 2-2V8.700c.57-.35 1-.97 1-1.690V4c0-1.100-1-2-2-2zm-5 12H9v-2h6v2zm5-7H4V4h16v3z"/></svg>
<svg class="ic" style="left:1684.1px;top:814.1px;width:28.2px;height:28.2px;" viewBox="0 0 24 24" preserveAspectRatio="xMidYMid meet"><path fill="#9ca3af" fill-rule="nonzero" d="M12 7V3H2v18h20V7H12zM6 19H4v-2h2v2zm0-4H4v-2h2v2zm0-4H4V9h2v2zm0-4H4V5h2v2zm4 12H8v-2h2v2zm0-4H8v-2h2v2zm0-4H8V9h2v2zm0-4H8V5h2v2zm10 12h-8v-2h2v-2h-2v-2h2v-2h-2V9h8v10zm-2-8h-2v2h2v-2zm0 4h-2v2h2v-2z"/></svg>
<span class="t" style="left:1725.40px;top:808.96px;font-size:24.5px;color:#111827;letter-spacing:0.139px;-webkit-text-stroke:0.83px #111827;">Horizon Fields LLC</span>
<span class="t" style="left:1726.40px;top:844.22px;font-size:21px;color:#6b7280;letter-spacing:-0.171px;">Dealer ID: DLR014</span>
<div style="left:1684.4px;top:895.5px;width:990.3px;height:2px;background:#f0f1f3"></div>
<svg class="ic" style="left:1684.3px;top:915.7px;width:24.6px;height:24.6px;" viewBox="0 0 24 24" preserveAspectRatio="xMidYMid meet"><path fill="#9ca3af" fill-rule="nonzero" d="M17 12h-5v5h5v-5zM16 1v2H8V1H6v2H5c-1.110 0-1.990.9-1.990 2L3 19c0 1.100.89 2 2 2h14c1.100 0 2-.9 2-2V5c0-1.100-.9-2-2-2h-1V1h-2zm3 18H5V8h14v11z"/></svg>
<span class="t" style="left:1722.60px;top:919.82px;font-size:21px;color:#4b5563;letter-spacing:0.313px;-webkit-text-stroke:0.71px #4b5563;">Order Date:</span>
<span class="t" style="left:2547.00px;top:920.22px;font-size:21px;color:#4b5563;letter-spacing:0.314px;">Nov 30, 2025</span>
<div class="amt" style="left:1684.4px;top:976.1px;width:990.3px;height:142.8px"></div>
<span class="t" style="left:1708.40px;top:1008.11px;font-size:19.6px;color:#374151;letter-spacing:0.663px;-webkit-text-stroke:0.67px #374151;">TOTAL AMOUNT</span>
<svg class="ic" style="left:2626.7px;top:1004.1px;width:23.5px;height:23.5px;" viewBox="0 0 24 24" preserveAspectRatio="xMidYMid meet"><path fill="#16a34a" fill-rule="nonzero" d="M21 18v1c0 1.100-.9 2-2 2H5c-1.110 0-2-.9-2-2V5c0-1.100.89-2 2-2h14c1.100 0 2 .9 2 2v1h-9c-1.110 0-2 .9-2 2v8c0 1.100.89 2 2 2h9zm-9-2h10V8H12v8zm4-2.500c-.83 0-1.500-.67-1.500-1.500s.67-1.500 1.500-1.500 1.500.67 1.500 1.500-.67 1.500-1.500 1.500z"/></svg>
<span class="t" style="left:1709.20px;top:1048.68px;font-size:44.8px;color:#111827;font-weight:700;letter-spacing:0.280px;">$143,614.68</span>
<div class="card-ft" style="left:1656.4px;top:1270.5px;width:1046.3px;height:105.5px"></div>
<div class="btn" style="left:1684.4px;top:1292.4px;width:488.15px;height:63px;background:#2563eb"></div>
<svg class="ic" style="left:1889.17px;top:1313.6px;width:22.6px;height:20px;" viewBox="0 0 576 512" preserveAspectRatio="xMidYMid meet"><path fill="#ffffff" fill-rule="nonzero" d="M288 32c-80.800 0-145.500 36.800-192.600 80.600C48.600 156 17.300 208 2.500 243.700c-3.300 7.900-3.300 16.700 0 24.600C17.300 304 48.600 356 95.400 399.400C142.500 443.200 207.200 480 288 480s145.500-36.800 192.600-80.600c46.800-43.500 78.100-95.400 93-131.100c3.300-7.900 3.300-16.700 0-24.600c-14.900-35.700-46.200-87.700-93-131.100C433.500 68.800 368.800 32 288 32zM144 256a144 144 0 1 1 288 0 144 144 0 1 1 -288 0zm144-64c0 35.300-28.700 64-64 64c-7.100 0-13.900-1.200-20.300-3.300c-5.500-1.800-11.900 1.600-11.700 7.400c.3 6.900 1.300 13.800 3.200 20.700c13.700 51.200 66.400 81.600 117.600 67.900s81.600-66.400 67.900-117.600c-11.100-41.500-47.800-69.400-88.600-71.100c-5.800-.2-9.200 6.100-7.400 11.700c2.100 6.400 3.300 13.200 3.300 20.300z"/></svg>
<span class="t" style="left:1920.27px;top:1314.91px;font-size:19.6px;color:#ffffff;letter-spacing:1.245px;-webkit-text-stroke:0.67px #ffffff;">View</span>
<div class="btn" style="left:2186.55px;top:1292.4px;width:488.15px;height:64px;background:#dcfce7"></div>
<svg class="ic" style="left:2376.03px;top:1309.5px;width:25.2px;height:25.2px;" viewBox="0 0 24 24" preserveAspectRatio="xMidYMid meet"><path fill="#15803d" fill-rule="nonzero" d="M17.65 6.350C16.200 4.900 14.210 4 12 4c-4.420 0-7.990 3.580-7.990 8s3.570 8 7.990 8c3.730 0 6.840-2.550 7.730-6h-2.080c-.82 2.330-3.040 4-5.650 4-3.310 0-6-2.690-6-6s2.690-6 6-6c1.660 0 3.140.69 4.220 1.780L13 11h7V4l-2.350 2.350z"/></svg>
<span class="t" style="left:2407.93px;top:1315.31px;font-size:19.6px;color:#15803d;letter-spacing:0.989px;-webkit-text-stroke:0.67px #15803d;">Reorder</span>
</article>
<article>
<div class="card" style="left:2733.8px;top:608px;width:1050.3px;height:770px"></div>
<div class="card-hd" style="left:2735.8px;top:610px;width:1046.3px;height:84.3px"></div>
<div style="left:2735.8px;top:694.3px;width:1046.3px;height:2px;background:#e5e7eb"></div>
<div style="left:2763.8px;top:637.65px;width:28px;height:28px;border:2.3px solid #6f6f6f;border-radius:6px;background:#fff;box-sizing:border-box"></div>
<span class="t" style="left:2812.90px;top:638.65px;font-size:28px;color:#111827;font-weight:700;letter-spacing:0.527px;">ORD-2025-077</span>
<div style="left:2763.8px;top:724.3px;width:107.5px;height:49.7px;border-radius:14px;background:#cffafe"></div>
<span class="t" style="left:2784.40px;top:738.72px;font-size:21px;color:#155e75;letter-spacing:0.630px;-webkit-text-stroke:0.71px #155e75;">Picked</span>
<span class="t" style="left:3684.60px;top:740.11px;font-size:19.6px;color:#6b7280;letter-spacing:1.024px;-webkit-text-stroke:0.4px #6b7280;">3 items</span>
<svg class="ic" style="left:3649.4px;top:738.5px;width:21.2px;height:21.2px;" viewBox="0 0 24 24" preserveAspectRatio="xMidYMid meet"><path fill="#6b7280" fill-rule="nonzero" d="M20 2H4c-1 0-2 .9-2 2v3.010c0 .72.43 1.340 1 1.690V20c0 1.100 1.100 2 2 2h14c.9 0 2-.9 2-2V8.700c.57-.35 1-.97 1-1.690V4c0-1.100-1-2-2-2zm-5 12H9v-2h6v2zm5-7H4V4h16v3z"/></svg>
<svg class="ic" style="left:2763.5px;top:809.9px;width:28.2px;height:28.2px;" viewBox="0 0 24 24" preserveAspectRatio="xMidYMid meet"><path fill="#9ca3af" fill-rule="nonzero" d="M12 7V3H2v18h20V7H12zM6 19H4v-2h2v2zm0-4H4v-2h2v2zm0-4H4V9h2v2zm0-4H4V5h2v2zm4 12H8v-2h2v2zm0-4H8v-2h2v2zm0-4H8V9h2v2zm0-4H8V5h2v2zm10 12h-8v-2h2v-2h-2v-2h2v-2h-2V9h8v10zm-2-8h-2v2h2v-2zm0 4h-2v2h2v-2z"/></svg>
<span class="t" style="left:2805.80px;top:804.76px;font-size:24.5px;color:#111827;letter-spacing:0.792px;-webkit-text-stroke:0.83px #111827;">Central Iowa Distributors</span>
<span class="t" style="left:2805.80px;top:840.02px;font-size:21px;color:#6b7280;letter-spacing:-0.108px;">Dealer ID: DLR017</span>
<div style="left:2763.8px;top:891.3px;width:990.3px;height:2px;background:#f0f1f3"></div>
<svg class="ic" style="left:2763.7px;top:911.5px;width:24.6px;height:24.6px;" viewBox="0 0 24 24" preserveAspectRatio="xMidYMid meet"><path fill="#9ca3af" fill-rule="nonzero" d="M17 12h-5v5h5v-5zM16 1v2H8V1H6v2H5c-1.110 0-1.990.9-1.990 2L3 19c0 1.100.89 2 2 2h14c1.100 0 2-.9 2-2V5c0-1.100-.9-2-2-2h-1V1h-2zm3 18H5V8h14v11z"/></svg>
<span class="t" style="left:2802.00px;top:915.62px;font-size:21px;color:#4b5563;letter-spacing:0.313px;-webkit-text-stroke:0.71px #4b5563;">Order Date:</span>
<span class="t" style="left:3626.40px;top:916.02px;font-size:21px;color:#4b5563;letter-spacing:0.314px;">Nov 30, 2025</span>
<svg class="ic" style="left:2763.6px;top:960.8px;width:25.2px;height:25.2px;" viewBox="0 0 24 24" preserveAspectRatio="xMidYMid meet"><path fill="#9ca3af" fill-rule="nonzero" d="M20 8h-3V4H3c-1.100 0-2 .9-2 2v11h2c0 1.660 1.340 3 3 3s3-1.340 3-3h6c0 1.660 1.340 3 3 3s3-1.340 3-3h2v-5l-3-4zM6 18.500c-.83 0-1.500-.67-1.500-1.500s.67-1.500 1.500-1.500 1.500.67 1.500 1.500-.67 1.500-1.500 1.500zm13.500-9l1.960 2.500H17V9.500h2.500zm-1.500 9c-.83 0-1.500-.67-1.500-1.500s.67-1.500 1.500-1.500 1.500.67 1.500 1.500-.67 1.500-1.500 1.500z"/></svg>
<span class="t" style="left:2802.00px;top:964.12px;font-size:21px;color:#4b5563;letter-spacing:0.334px;-webkit-text-stroke:0.71px #4b5563;">Est. Delivery:</span>
<span class="t" style="left:3639.60px;top:964.52px;font-size:21px;color:#4b5563;letter-spacing:0.194px;">Dec 7, 2025</span>
<div class="amt" style="left:2763.8px;top:1020.4px;width:990.3px;height:142.8px"></div>
<span class="t" style="left:2787.80px;top:1052.41px;font-size:19.6px;color:#374151;letter-spacing:0.663px;-webkit-text-stroke:0.67px #374151;">TOTAL AMOUNT</span>
<svg class="ic" style="left:3706.1px;top:1048.4px;width:23.5px;height:23.5px;" viewBox="0 0 24 24" preserveAspectRatio="xMidYMid meet"><path fill="#16a34a" fill-rule="nonzero" d="M21 18v1c0 1.100-.9 2-2 2H5c-1.110 0-2-.9-2-2V5c0-1.100.89-2 2-2h14c1.100 0 2 .9 2 2v1h-9c-1.110 0-2 .9-2 2v8c0 1.100.89 2 2 2h9zm-9-2h10V8H12v8zm4-2.500c-.83 0-1.500-.67-1.500-1.500s.67-1.500 1.500-1.500 1.500.67 1.500 1.500-.67 1.500-1.500 1.500z"/></svg>
<span class="t" style="left:2788.60px;top:1092.98px;font-size:44.8px;color:#111827;font-weight:700;letter-spacing:0.301px;">$79,741.80</span>
<div class="card-ft" style="left:2735.8px;top:1191.5px;width:1046.3px;height:184.5px"></div>
<div class="btn" style="left:2763.8px;top:1216.4px;width:488.15px;height:61.6px;background:#2563eb"></div>
<svg class="ic" style="left:2968.57px;top:1236.9px;width:22.6px;height:20px;" viewBox="0 0 576 512" preserveAspectRatio="xMidYMid meet"><path fill="#ffffff" fill-rule="nonzero" d="M288 32c-80.800 0-145.500 36.800-192.600 80.600C48.600 156 17.300 208 2.500 243.700c-3.300 7.900-3.300 16.700 0 24.600C17.300 304 48.600 356 95.400 399.400C142.500 443.200 207.200 480 288 480s145.500-36.800 192.600-80.600c46.800-43.500 78.100-95.400 93-131.100c3.300-7.900 3.300-16.700 0-24.600c-14.900-35.700-46.200-87.700-93-131.100C433.500 68.800 368.800 32 288 32zM144 256a144 144 0 1 1 288 0 144 144 0 1 1 -288 0zm144-64c0 35.300-28.700 64-64 64c-7.100 0-13.900-1.200-20.300-3.300c-5.500-1.800-11.900 1.600-11.700 7.400c.3 6.900 1.300 13.800 3.200 20.700c13.700 51.200 66.400 81.600 117.600 67.900s81.600-66.400 67.900-117.600c-11.100-41.500-47.800-69.400-88.600-71.100c-5.800-.2-9.200 6.100-7.400 11.700c2.100 6.400 3.300 13.200 3.300 20.300z"/></svg>
<span class="t" style="left:2999.68px;top:1238.21px;font-size:19.6px;color:#ffffff;letter-spacing:1.245px;-webkit-text-stroke:0.67px #ffffff;">View</span>
<div class="btn" style="left:3265.95px;top:1216.4px;width:488.15px;height:61.6px;background:#f3e8ff"></div>
<svg class="ic" style="left:3473.33px;top:1236.7px;width:14.8px;height:19.8px;" viewBox="0 0 384 512" preserveAspectRatio="xMidYMid meet"><path fill="#7e22ce" fill-rule="nonzero" d="M215.700 499.200C267 435 384 279.400 384 192C384 86 298 0 192 0S0 86 0 192c0 87.400 117 243 168.300 307.200c12.300 15.300 35.100 15.300 47.400 0zM192 128a64 64 0 1 1 0 128 64 64 0 1 1 0-128z"/></svg>
<span class="t" style="left:3500.33px;top:1238.21px;font-size:19.6px;color:#7e22ce;letter-spacing:0.885px;-webkit-text-stroke:0.67px #7e22ce;">Track</span>
<div class="btn" style="left:2763.8px;top:1292.7px;width:990.3px;height:64px;background:#dcfce7"></div>
<svg class="ic" style="left:3204.35px;top:1309.8px;width:25.2px;height:25.2px;" viewBox="0 0 24 24" preserveAspectRatio="xMidYMid meet"><path fill="#15803d" fill-rule="nonzero" d="M17.65 6.350C16.200 4.900 14.210 4 12 4c-4.420 0-7.990 3.580-7.990 8s3.570 8 7.990 8c3.730 0 6.840-2.550 7.730-6h-2.080c-.82 2.330-3.040 4-5.650 4-3.310 0-6-2.690-6-6s2.690-6 6-6c1.660 0 3.140.69 4.220 1.780L13 11h7V4l-2.350 2.350z"/></svg>
<span class="t" style="left:3236.25px;top:1315.61px;font-size:19.6px;color:#15803d;letter-spacing:0.989px;-webkit-text-stroke:0.67px #15803d;">Reorder</span>
</article>
<article>
<div class="card" style="left:576px;top:1406px;width:1050.3px;height:770px"></div>
<div class="card-hd" style="left:578px;top:1408px;width:1046.3px;height:84.3px"></div>
<div style="left:578px;top:1492.3px;width:1046.3px;height:2px;background:#e5e7eb"></div>
<div style="left:606px;top:1435.65px;width:28px;height:28px;border:2.3px solid #6f6f6f;border-radius:6px;background:#fff;box-sizing:border-box"></div>
<span class="t" style="left:655.10px;top:1436.65px;font-size:28px;color:#111827;font-weight:700;letter-spacing:0.436px;">ORD-2025-084</span>
<div style="left:606px;top:1522.3px;width:217px;height:49.7px;border-radius:14px;background:#ffedd5"></div>
<span class="t" style="left:626.60px;top:1536.72px;font-size:21px;color:#9a3412;letter-spacing:0.349px;-webkit-text-stroke:0.71px #9a3412;">Return Requested</span>
<span class="t" style="left:1525.80px;top:1538.11px;font-size:19.6px;color:#6b7280;letter-spacing:1.191px;-webkit-text-stroke:0.4px #6b7280;">1 items</span>
<svg class="ic" style="left:1491.6px;top:1536.5px;width:21.2px;height:21.2px;" viewBox="0 0 24 24" preserveAspectRatio="xMidYMid meet"><path fill="#6b7280" fill-rule="nonzero" d="M20 2H4c-1 0-2 .9-2 2v3.010c0 .72.43 1.340 1 1.690V20c0 1.100 1.100 2 2 2h14c.9 0 2-.9 2-2V8.700c.57-.35 1-.97 1-1.690V4c0-1.100-1-2-2-2zm-5 12H9v-2h6v2zm5-7H4V4h16v3z"/></svg>
<svg class="ic" style="left:605.7px;top:1607.9px;width:28.2px;height:28.2px;" viewBox="0 0 24 24" preserveAspectRatio="xMidYMid meet"><path fill="#9ca3af" fill-rule="nonzero" d="M12 7V3H2v18h20V7H12zM6 19H4v-2h2v2zm0-4H4v-2h2v2zm0-4H4V9h2v2zm0-4H4V5h2v2zm4 12H8v-2h2v2zm0-4H8v-2h2v2zm0-4H8V9h2v2zm0-4H8V5h2v2zm10 12h-8v-2h2v-2h-2v-2h2v-2h-2V9h8v10zm-2-8h-2v2h2v-2zm0 4h-2v2h2v-2z"/></svg>
<span class="t" style="left:648.00px;top:1602.76px;font-size:24.5px;color:#111827;letter-spacing:0.374px;-webkit-text-stroke:0.83px #111827;">Golden Grain Enterprises</span>
<span class="t" style="left:648.00px;top:1638.02px;font-size:21px;color:#6b7280;letter-spacing:-0.108px;">Dealer ID: DLR012</span>
<div style="left:606px;top:1689.3px;width:990.3px;height:2px;background:#f0f1f3"></div>
<svg class="ic" style="left:605.9px;top:1709.5px;width:24.6px;height:24.6px;" viewBox="0 0 24 24" preserveAspectRatio="xMidYMid meet"><path fill="#9ca3af" fill-rule="nonzero" d="M17 12h-5v5h5v-5zM16 1v2H8V1H6v2H5c-1.110 0-1.990.9-1.990 2L3 19c0 1.100.89 2 2 2h14c1.100 0 2-.9 2-2V5c0-1.100-.9-2-2-2h-1V1h-2zm3 18H5V8h14v11z"/></svg>
<span class="t" style="left:644.20px;top:1713.62px;font-size:21px;color:#4b5563;letter-spacing:0.313px;-webkit-text-stroke:0.71px #4b5563;">Order Date:</span>
<span class="t" style="left:1468.60px;top:1714.02px;font-size:21px;color:#4b5563;letter-spacing:0.314px;">Nov 30, 2025</span>
<svg class="ic" style="left:605.8px;top:1758.8px;width:25.2px;height:25.2px;" viewBox="0 0 24 24" preserveAspectRatio="xMidYMid meet"><path fill="#9ca3af" fill-rule="nonzero" d="M20 8h-3V4H3c-1.100 0-2 .9-2 2v11h2c0 1.660 1.340 3 3 3s3-1.340 3-3h6c0 1.660 1.340 3 3 3s3-1.340 3-3h2v-5l-3-4zM6 18.500c-.83 0-1.500-.67-1.500-1.500s.67-1.500 1.500-1.500 1.500.67 1.500 1.500-.67 1.500-1.500 1.500zm13.500-9l1.960 2.500H17V9.500h2.500zm-1.500 9c-.83 0-1.500-.67-1.500-1.500s.67-1.500 1.500-1.500 1.500.67 1.500 1.500-.67 1.500-1.500 1.500z"/></svg>
<span class="t" style="left:644.20px;top:1762.12px;font-size:21px;color:#4b5563;letter-spacing:0.334px;-webkit-text-stroke:0.71px #4b5563;">Est. Delivery:</span>
<span class="t" style="left:1481.80px;top:1762.52px;font-size:21px;color:#4b5563;letter-spacing:0.194px;">Dec 7, 2025</span>
<div class="amt" style="left:606px;top:1818.4px;width:990.3px;height:142.8px"></div>
<span class="t" style="left:630.00px;top:1850.41px;font-size:19.6px;color:#374151;letter-spacing:0.663px;-webkit-text-stroke:0.67px #374151;">TOTAL AMOUNT</span>
<svg class="ic" style="left:1548.3px;top:1846.4px;width:23.5px;height:23.5px;" viewBox="0 0 24 24" preserveAspectRatio="xMidYMid meet"><path fill="#16a34a" fill-rule="nonzero" d="M21 18v1c0 1.100-.9 2-2 2H5c-1.110 0-2-.9-2-2V5c0-1.100.89-2 2-2h14c1.100 0 2 .9 2 2v1h-9c-1.110 0-2 .9-2 2v8c0 1.100.89 2 2 2h9zm-9-2h10V8H12v8zm4-2.500c-.83 0-1.500-.67-1.500-1.500s.67-1.500 1.500-1.500 1.500.67 1.500 1.500-.67 1.500-1.500 1.500z"/></svg>
<span class="t" style="left:630.80px;top:1890.98px;font-size:44.8px;color:#111827;font-weight:700;letter-spacing:0.323px;">$39,038.61</span>
<div class="card-ft" style="left:578px;top:1989.5px;width:1046.3px;height:184.5px"></div>
<div class="btn" style="left:606px;top:2014.4px;width:488.15px;height:61.6px;background:#2563eb"></div>
<svg class="ic" style="left:810.775px;top:2034.9px;width:22.6px;height:20px;" viewBox="0 0 576 512" preserveAspectRatio="xMidYMid meet"><path fill="#ffffff" fill-rule="nonzero" d="M288 32c-80.800 0-145.500 36.800-192.600 80.600C48.600 156 17.300 208 2.500 243.700c-3.300 7.900-3.300 16.700 0 24.600C17.300 304 48.600 356 95.400 399.400C142.500 443.200 207.200 480 288 480s145.500-36.800 192.600-80.600c46.800-43.500 78.100-95.400 93-131.100c3.300-7.900 3.300-16.700 0-24.600c-14.900-35.700-46.200-87.700-93-131.100C433.500 68.800 368.800 32 288 32zM144 256a144 144 0 1 1 288 0 144 144 0 1 1 -288 0zm144-64c0 35.300-28.700 64-64 64c-7.100 0-13.900-1.200-20.300-3.300c-5.500-1.800-11.900 1.600-11.700 7.400c.3 6.900 1.300 13.800 3.200 20.700c13.700 51.200 66.400 81.600 117.600 67.900s81.600-66.400 67.900-117.600c-11.100-41.500-47.800-69.400-88.600-71.100c-5.800-.2-9.200 6.100-7.400 11.700c2.100 6.400 3.300 13.200 3.300 20.300z"/></svg>
<span class="t" style="left:841.88px;top:2036.21px;font-size:19.6px;color:#ffffff;letter-spacing:1.245px;-webkit-text-stroke:0.67px #ffffff;">View</span>
<div class="btn" style="left:1108.15px;top:2014.4px;width:488.15px;height:61.6px;background:#f3e8ff"></div>
<svg class="ic" style="left:1315.53px;top:2034.7px;width:14.8px;height:19.8px;" viewBox="0 0 384 512" preserveAspectRatio="xMidYMid meet"><path fill="#7e22ce" fill-rule="nonzero" d="M215.700 499.200C267 435 384 279.400 384 192C384 86 298 0 192 0S0 86 0 192c0 87.400 117 243 168.300 307.200c12.300 15.300 35.100 15.300 47.400 0zM192 128a64 64 0 1 1 0 128 64 64 0 1 1 0-128z"/></svg>
<span class="t" style="left:1342.53px;top:2036.21px;font-size:19.6px;color:#7e22ce;letter-spacing:0.885px;-webkit-text-stroke:0.67px #7e22ce;">Track</span>
<div class="btn" style="left:606px;top:2090.7px;width:990.3px;height:64px;background:#dcfce7"></div>
<svg class="ic" style="left:1046.55px;top:2107.8px;width:25.2px;height:25.2px;" viewBox="0 0 24 24" preserveAspectRatio="xMidYMid meet"><path fill="#15803d" fill-rule="nonzero" d="M17.65 6.350C16.200 4.900 14.210 4 12 4c-4.420 0-7.990 3.580-7.990 8s3.570 8 7.990 8c3.730 0 6.840-2.550 7.730-6h-2.080c-.82 2.330-3.040 4-5.650 4-3.310 0-6-2.690-6-6s2.690-6 6-6c1.660 0 3.140.69 4.220 1.780L13 11h7V4l-2.350 2.350z"/></svg>
<span class="t" style="left:1078.45px;top:2113.61px;font-size:19.6px;color:#15803d;letter-spacing:0.989px;-webkit-text-stroke:0.67px #15803d;">Reorder</span>
</article>
<article>
<div class="card" style="left:1654.4px;top:1406px;width:1050.3px;height:770px"></div>
<div class="card-hd" style="left:1656.4px;top:1408px;width:1046.3px;height:84.3px"></div>
<div style="left:1656.4px;top:1492.3px;width:1046.3px;height:2px;background:#e5e7eb"></div>
<div style="left:1684.4px;top:1435.65px;width:28px;height:28px;border:2.3px solid #6f6f6f;border-radius:6px;background:#fff;box-sizing:border-box"></div>
<span class="t" style="left:1733.50px;top:1436.65px;font-size:28px;color:#111827;font-weight:700;letter-spacing:0.527px;">ORD-2025-057</span>
<div style="left:1684.4px;top:1522.3px;width:138.5px;height:49.7px;border-radius:14px;background:#fee2e2"></div>
<span class="t" style="left:1705.00px;top:1536.72px;font-size:21px;color:#991b1b;letter-spacing:0.473px;-webkit-text-stroke:0.71px #991b1b;">Cancelled</span>
<span class="t" style="left:2605.20px;top:1538.11px;font-size:19.6px;color:#6b7280;letter-spacing:1.024px;-webkit-text-stroke:0.4px #6b7280;">2 items</span>
<svg class="ic" style="left:2570px;top:1536.5px;width:21.2px;height:21.2px;" viewBox="0 0 24 24" preserveAspectRatio="xMidYMid meet"><path fill="#6b7280" fill-rule="nonzero" d="M20 2H4c-1 0-2 .9-2 2v3.010c0 .72.43 1.340 1 1.690V20c0 1.100 1.100 2 2 2h14c.9 0 2-.9 2-2V8.700c.57-.35 1-.97 1-1.690V4c0-1.100-1-2-2-2zm-5 12H9v-2h6v2zm5-7H4V4h16v3z"/></svg>
<svg class="ic" style="left:1684.1px;top:1607.9px;width:28.2px;height:28.2px;" viewBox="0 0 24 24" preserveAspectRatio="xMidYMid meet"><path fill="#9ca3af" fill-rule="nonzero" d="M12 7V3H2v18h20V7H12zM6 19H4v-2h2v2zm0-4H4v-2h2v2zm0-4H4V9h2v2zm0-4H4V5h2v2zm4 12H8v-2h2v2zm0-4H8v-2h2v2zm0-4H8V9h2v2zm0-4H8V5h2v2zm10 12h-8v-2h2v-2h-2v-2h2v-2h-2V9h8v10zm-2-8h-2v2h2v-2zm0 4h-2v2h2v-2z"/></svg>
<span class="t" style="left:1725.40px;top:1602.76px;font-size:24.5px;color:#111827;letter-spacing:0.335px;-webkit-text-stroke:0.83px #111827;">Riverbend Farms Co-op</span>
<span class="t" style="left:1726.40px;top:1638.02px;font-size:21px;color:#6b7280;letter-spacing:-0.108px;">Dealer ID: DLR013</span>
<div style="left:1684.4px;top:1689.3px;width:990.3px;height:2px;background:#f0f1f3"></div>
<svg class="ic" style="left:1684.3px;top:1709.5px;width:24.6px;height:24.6px;" viewBox="0 0 24 24" preserveAspectRatio="xMidYMid meet"><path fill="#9ca3af" fill-rule="nonzero" d="M17 12h-5v5h5v-5zM16 1v2H8V1H6v2H5c-1.110 0-1.990.9-1.990 2L3 19c0 1.100.89 2 2 2h14c1.100 0 2-.9 2-2V5c0-1.100-.9-2-2-2h-1V1h-2zm3 18H5V8h14v11z"/></svg>
<span class="t" style="left:1722.60px;top:1713.62px;font-size:21px;color:#4b5563;letter-spacing:0.313px;-webkit-text-stroke:0.71px #4b5563;">Order Date:</span>
<span class="t" style="left:2547.00px;top:1714.02px;font-size:21px;color:#4b5563;letter-spacing:0.314px;">Nov 29, 2025</span>
<div class="amt" style="left:1684.4px;top:1769.9px;width:990.3px;height:142.8px"></div>
<span class="t" style="left:1708.40px;top:1801.91px;font-size:19.6px;color:#374151;letter-spacing:0.663px;-webkit-text-stroke:0.67px #374151;">TOTAL AMOUNT</span>
<svg class="ic" style="left:2626.7px;top:1797.9px;width:23.5px;height:23.5px;" viewBox="0 0 24 24" preserveAspectRatio="xMidYMid meet"><path fill="#16a34a" fill-rule="nonzero" d="M21 18v1c0 1.100-.9 2-2 2H5c-1.110 0-2-.9-2-2V5c0-1.100.89-2 2-2h14c1.100 0 2 .9 2 2v1h-9c-1.110 0-2 .9-2 2v8c0 1.100.89 2 2 2h9zm-9-2h10V8H12v8zm4-2.500c-.83 0-1.500-.67-1.500-1.500s.67-1.500 1.500-1.500 1.500.67 1.500 1.500-.67 1.500-1.500 1.500z"/></svg>
<span class="t" style="left:1709.20px;top:1842.48px;font-size:44.8px;color:#111827;font-weight:700;letter-spacing:0.323px;">$57,575.40</span>
<div class="card-ft" style="left:1656.4px;top:2068.5px;width:1046.3px;height:105.5px"></div>
<div class="btn" style="left:1684.4px;top:2090.4px;width:488.15px;height:63px;background:#2563eb"></div>
<svg class="ic" style="left:1889.17px;top:2111.6px;width:22.6px;height:20px;" viewBox="0 0 576 512" preserveAspectRatio="xMidYMid meet"><path fill="#ffffff" fill-rule="nonzero" d="M288 32c-80.800 0-145.500 36.800-192.600 80.600C48.600 156 17.300 208 2.500 243.700c-3.300 7.900-3.300 16.700 0 24.600C17.300 304 48.600 356 95.400 399.400C142.500 443.200 207.200 480 288 480s145.500-36.800 192.600-80.600c46.800-43.500 78.100-95.400 93-131.100c3.300-7.900 3.300-16.700 0-24.600c-14.900-35.700-46.200-87.700-93-131.100C433.500 68.800 368.800 32 288 32zM144 256a144 144 0 1 1 288 0 144 144 0 1 1 -288 0zm144-64c0 35.300-28.700 64-64 64c-7.100 0-13.900-1.200-20.300-3.300c-5.500-1.800-11.900 1.600-11.700 7.400c.3 6.900 1.300 13.800 3.200 20.700c13.700 51.200 66.400 81.600 117.600 67.900s81.600-66.400 67.900-117.600c-11.100-41.500-47.800-69.400-88.600-71.100c-5.800-.2-9.200 6.100-7.400 11.700c2.100 6.400 3.300 13.200 3.300 20.300z"/></svg>
<span class="t" style="left:1920.27px;top:2112.91px;font-size:19.6px;color:#ffffff;letter-spacing:1.245px;-webkit-text-stroke:0.67px #ffffff;">View</span>
<div class="btn" style="left:2186.55px;top:2090.4px;width:488.15px;height:64px;background:#dcfce7"></div>
<svg class="ic" style="left:2376.03px;top:2107.5px;width:25.2px;height:25.2px;" viewBox="0 0 24 24" preserveAspectRatio="xMidYMid meet"><path fill="#15803d" fill-rule="nonzero" d="M17.65 6.350C16.200 4.900 14.210 4 12 4c-4.420 0-7.990 3.580-7.990 8s3.570 8 7.990 8c3.730 0 6.840-2.550 7.730-6h-2.080c-.82 2.330-3.040 4-5.650 4-3.310 0-6-2.690-6-6s2.690-6 6-6c1.660 0 3.140.69 4.220 1.780L13 11h7V4l-2.350 2.350z"/></svg>
<span class="t" style="left:2407.93px;top:2113.31px;font-size:19.6px;color:#15803d;letter-spacing:0.989px;-webkit-text-stroke:0.67px #15803d;">Reorder</span>
</article>
<article>
<div class="card" style="left:2733.8px;top:1406px;width:1050.3px;height:770px"></div>
<div class="card-hd" style="left:2735.8px;top:1408px;width:1046.3px;height:84.3px"></div>
<div style="left:2735.8px;top:1492.3px;width:1046.3px;height:2px;background:#e5e7eb"></div>
<div style="left:2763.8px;top:1435.65px;width:28px;height:28px;border:2.3px solid #6f6f6f;border-radius:6px;background:#fff;box-sizing:border-box"></div>
<span class="t" style="left:2812.90px;top:1436.65px;font-size:28px;color:#111827;font-weight:700;letter-spacing:0.527px;">ORD-2025-040</span>
<div style="left:2763.8px;top:1522.3px;width:107.5px;height:49.7px;border-radius:14px;background:#cffafe"></div>
<span class="t" style="left:2784.40px;top:1536.72px;font-size:21px;color:#155e75;letter-spacing:0.630px;-webkit-text-stroke:0.71px #155e75;">Picked</span>
<span class="t" style="left:3684.60px;top:1538.11px;font-size:19.6px;color:#6b7280;letter-spacing:1.024px;-webkit-text-stroke:0.4px #6b7280;">4 items</span>
<svg class="ic" style="left:3649.4px;top:1536.5px;width:21.2px;height:21.2px;" viewBox="0 0 24 24" preserveAspectRatio="xMidYMid meet"><path fill="#6b7280" fill-rule="nonzero" d="M20 2H4c-1 0-2 .9-2 2v3.010c0 .72.43 1.340 1 1.690V20c0 1.100 1.100 2 2 2h14c.9 0 2-.9 2-2V8.700c.57-.35 1-.97 1-1.690V4c0-1.100-1-2-2-2zm-5 12H9v-2h6v2zm5-7H4V4h16v3z"/></svg>
<svg class="ic" style="left:2763.5px;top:1607.9px;width:28.2px;height:28.2px;" viewBox="0 0 24 24" preserveAspectRatio="xMidYMid meet"><path fill="#9ca3af" fill-rule="nonzero" d="M12 7V3H2v18h20V7H12zM6 19H4v-2h2v2zm0-4H4v-2h2v2zm0-4H4V9h2v2zm0-4H4V5h2v2zm4 12H8v-2h2v2zm0-4H8v-2h2v2zm0-4H8V9h2v2zm0-4H8V5h2v2zm10 12h-8v-2h2v-2h-2v-2h2v-2h-2V9h8v10zm-2-8h-2v2h2v-2zm0 4h-2v2h2v-2z"/></svg>
<span class="t" style="left:2804.80px;top:1602.76px;font-size:24.5px;color:#111827;letter-spacing:0.698px;-webkit-text-stroke:0.83px #111827;">Plains Agricultural Supply</span>
<span class="t" style="left:2805.80px;top:1638.02px;font-size:21px;color:#6b7280;letter-spacing:-0.108px;">Dealer ID: DLR020</span>
<div style="left:2763.8px;top:1689.3px;width:990.3px;height:2px;background:#f0f1f3"></div>
<svg class="ic" style="left:2763.7px;top:1709.5px;width:24.6px;height:24.6px;" viewBox="0 0 24 24" preserveAspectRatio="xMidYMid meet"><path fill="#9ca3af" fill-rule="nonzero" d="M17 12h-5v5h5v-5zM16 1v2H8V1H6v2H5c-1.110 0-1.990.9-1.990 2L3 19c0 1.100.89 2 2 2h14c1.100 0 2-.9 2-2V5c0-1.100-.9-2-2-2h-1V1h-2zm3 18H5V8h14v11z"/></svg>
<span class="t" style="left:2802.00px;top:1713.62px;font-size:21px;color:#4b5563;letter-spacing:0.313px;-webkit-text-stroke:0.71px #4b5563;">Order Date:</span>
<span class="t" style="left:3626.40px;top:1714.02px;font-size:21px;color:#4b5563;letter-spacing:0.314px;">Nov 27, 2025</span>
<svg class="ic" style="left:2763.6px;top:1758.8px;width:25.2px;height:25.2px;" viewBox="0 0 24 24" preserveAspectRatio="xMidYMid meet"><path fill="#9ca3af" fill-rule="nonzero" d="M20 8h-3V4H3c-1.100 0-2 .9-2 2v11h2c0 1.660 1.340 3 3 3s3-1.340 3-3h6c0 1.660 1.340 3 3 3s3-1.340 3-3h2v-5l-3-4zM6 18.500c-.83 0-1.500-.67-1.500-1.500s.67-1.500 1.500-1.500 1.500.67 1.500 1.500-.67 1.500-1.500 1.500zm13.500-9l1.960 2.500H17V9.500h2.500zm-1.500 9c-.83 0-1.500-.67-1.500-1.500s.67-1.500 1.500-1.500 1.500.67 1.500 1.500-.67 1.500-1.500 1.500z"/></svg>
<span class="t" style="left:2802.00px;top:1762.12px;font-size:21px;color:#4b5563;letter-spacing:0.334px;-webkit-text-stroke:0.71px #4b5563;">Est. Delivery:</span>
<span class="t" style="left:3639.60px;top:1762.52px;font-size:21px;color:#4b5563;letter-spacing:0.194px;">Dec 4, 2025</span>
<div class="amt" style="left:2763.8px;top:1818.4px;width:990.3px;height:142.8px"></div>
<span class="t" style="left:2787.80px;top:1850.41px;font-size:19.6px;color:#374151;letter-spacing:0.663px;-webkit-text-stroke:0.67px #374151;">TOTAL AMOUNT</span>
<svg class="ic" style="left:3706.1px;top:1846.4px;width:23.5px;height:23.5px;" viewBox="0 0 24 24" preserveAspectRatio="xMidYMid meet"><path fill="#16a34a" fill-rule="nonzero" d="M21 18v1c0 1.100-.9 2-2 2H5c-1.110 0-2-.9-2-2V5c0-1.100.89-2 2-2h14c1.100 0 2 .9 2 2v1h-9c-1.110 0-2 .9-2 2v8c0 1.100.89 2 2 2h9zm-9-2h10V8H12v8zm4-2.500c-.83 0-1.500-.67-1.500-1.500s.67-1.500 1.500-1.500 1.500.67 1.500 1.500-.67 1.500-1.500 1.500z"/></svg>
<span class="t" style="left:2788.60px;top:1890.98px;font-size:44.8px;color:#111827;font-weight:700;letter-spacing:0.246px;">$49,462.73</span>
<div class="card-ft" style="left:2735.8px;top:1989.5px;width:1046.3px;height:184.5px"></div>
<div class="btn" style="left:2763.8px;top:2014.4px;width:488.15px;height:61.6px;background:#2563eb"></div>
<svg class="ic" style="left:2968.57px;top:2034.9px;width:22.6px;height:20px;" viewBox="0 0 576 512" preserveAspectRatio="xMidYMid meet"><path fill="#ffffff" fill-rule="nonzero" d="M288 32c-80.800 0-145.500 36.800-192.600 80.600C48.600 156 17.300 208 2.500 243.700c-3.300 7.900-3.300 16.700 0 24.600C17.300 304 48.600 356 95.400 399.400C142.500 443.200 207.200 480 288 480s145.500-36.800 192.600-80.600c46.800-43.500 78.100-95.400 93-131.100c3.300-7.900 3.300-16.700 0-24.600c-14.900-35.700-46.200-87.700-93-131.100C433.500 68.800 368.800 32 288 32zM144 256a144 144 0 1 1 288 0 144 144 0 1 1 -288 0zm144-64c0 35.300-28.700 64-64 64c-7.100 0-13.900-1.200-20.300-3.300c-5.500-1.800-11.900 1.600-11.700 7.400c.3 6.900 1.300 13.800 3.200 20.700c13.700 51.200 66.400 81.600 117.600 67.900s81.600-66.400 67.900-117.600c-11.100-41.500-47.800-69.400-88.600-71.100c-5.800-.2-9.200 6.100-7.400 11.700c2.100 6.400 3.300 13.200 3.300 20.300z"/></svg>
<span class="t" style="left:2999.68px;top:2036.21px;font-size:19.6px;color:#ffffff;letter-spacing:1.245px;-webkit-text-stroke:0.67px #ffffff;">View</span>
<div class="btn" style="left:3265.95px;top:2014.4px;width:488.15px;height:61.6px;background:#f3e8ff"></div>
<svg class="ic" style="left:3473.33px;top:2034.7px;width:14.8px;height:19.8px;" viewBox="0 0 384 512" preserveAspectRatio="xMidYMid meet"><path fill="#7e22ce" fill-rule="nonzero" d="M215.700 499.200C267 435 384 279.400 384 192C384 86 298 0 192 0S0 86 0 192c0 87.400 117 243 168.300 307.200c12.300 15.300 35.100 15.300 47.400 0zM192 128a64 64 0 1 1 0 128 64 64 0 1 1 0-128z"/></svg>
<span class="t" style="left:3500.33px;top:2036.21px;font-size:19.6px;color:#7e22ce;letter-spacing:0.885px;-webkit-text-stroke:0.67px #7e22ce;">Track</span>
<div class="btn" style="left:2763.8px;top:2090.7px;width:990.3px;height:64px;background:#dcfce7"></div>
<svg class="ic" style="left:3204.35px;top:2107.8px;width:25.2px;height:25.2px;" viewBox="0 0 24 24" preserveAspectRatio="xMidYMid meet"><path fill="#15803d" fill-rule="nonzero" d="M17.65 6.350C16.200 4.900 14.210 4 12 4c-4.420 0-7.990 3.580-7.990 8s3.570 8 7.990 8c3.730 0 6.840-2.550 7.730-6h-2.080c-.82 2.330-3.040 4-5.650 4-3.310 0-6-2.690-6-6s2.690-6 6-6c1.660 0 3.140.69 4.220 1.780L13 11h7V4l-2.350 2.350z"/></svg>
<span class="t" style="left:3236.25px;top:2113.61px;font-size:19.6px;color:#15803d;letter-spacing:0.989px;-webkit-text-stroke:0.67px #15803d;">Reorder</span>
</article>
</main>
<header>
<div class="header"></div>
<div style="left:42px;top:22px;width:80px;height:80px;border-radius:16px;background:linear-gradient(135deg,#cdaa61 0%,#be9a52 100%);box-shadow:0 4px 14px rgba(201,169,97,.22)"></div>
<svg class="ic" style="left:64px;top:42.8px;width:35.5px;height:35.5px;" viewBox="0 0 512 512" preserveAspectRatio="xMidYMid meet"><path fill="#0f172a" fill-rule="nonzero" d="M512 32c0 113.600-84.600 207.500-194.200 222c-7.100-53.400-30.600-101.600-65.300-139.300C290.800 46.300 364 0 448 0h32c17.700 0 32 14.300 32 32zM0 96C0 78.300 14.300 64 32 64H64c123.700 0 224 100.300 224 224v32V480c0 17.700-14.300 32-32 32s-32-14.300-32-32V320C100.300 320 0 219.700 0 96z"/></svg>
<span class="t" style="left:148.80px;top:28.71px;font-size:32px;color:#ffffff;font-weight:700;letter-spacing:-0.216px;">Nexgile-CultivaIQ</span>
<span class="t" style="left:149.80px;top:78.97px;font-size:20px;color:#c9a961;letter-spacing:2.444px;-webkit-text-stroke:0.4px #c9a961;">CULTIVATING INTELLIGENT DECISIONS</span>
<svg class="ic" style="left:1321px;top:49.2px;width:28.6px;height:28.6px;" viewBox="0 0 512 512" preserveAspectRatio="xMidYMid meet"><path fill="#e8ebf0" fill-rule="nonzero" d="M0 256a256 256 0 1 1 512 0A256 256 0 1 1 0 256zM288 96a32 32 0 1 0 -64 0 32 32 0 1 0 64 0zM256 416c35.300 0 64-28.700 64-64c0-17.400-6.900-33.100-18.100-44.600L366 161.700c5.300-12.100-.2-26.300-12.300-31.600s-26.300 .2-31.600 12.300L257.900 288c-.6 0-1.300 0-1.900 0c-35.300 0-64 28.700-64 64s28.700 64 64 64zM176 144a32 32 0 1 0 -64 0 32 32 0 1 0 64 0zM96 288a32 32 0 1 0 0-64 32 32 0 1 0 0 64zm352-32a32 32 0 1 0 -64 0 32 32 0 1 0 64 0z"/></svg>
<span class="t" style="left:1363.00px;top:48.97px;font-size:25.2px;color:#eef1f5;letter-spacing:-0.026px;-webkit-text-stroke:0.4px #eef1f5;">Dashboard</span>
<svg class="ic" style="left:1534px;top:49.2px;width:28.6px;height:28.6px;" viewBox="0 0 512 512" preserveAspectRatio="xMidYMid meet"><path fill="#e8ebf0" fill-rule="nonzero" d="M64 64c0-17.700-14.300-32-32-32S0 46.300 0 64V400c0 44.200 35.800 80 80 80H480c17.700 0 32-14.300 32-32s-14.300-32-32-32H80c-8.800 0-16-7.200-16-16V64zm406.600 86.600c12.500-12.500 12.500-32.800 0-45.300s-32.800-12.500-45.300 0L320 210.700l-57.400-57.400c-12.500-12.500-32.800-12.500-45.300 0l-112 112c-12.500 12.500-12.500 32.800 0 45.300s32.800 12.500 45.300 0L240 221.300l57.400 57.400c12.500 12.500 32.800 12.500 45.300 0l128-128z"/></svg>
<span class="t" style="left:1578.00px;top:48.97px;font-size:25.2px;color:#eef1f5;letter-spacing:0.226px;-webkit-text-stroke:0.4px #eef1f5;">Analytics</span>
<svg class="ic" style="left:1731.7px;top:49.2px;width:24px;height:28.6px;" viewBox="0 0 448 512" preserveAspectRatio="xMidYMid meet"><path fill="#e8ebf0" fill-rule="nonzero" d="M224 256A128 128 0 1 0 224 0a128 128 0 1 0 0 256zm-45.700 48C79.800 304 0 383.800 0 482.300C0 498.700 13.300 512 29.700 512H418.300c16.400 0 29.700-13.300 29.700-29.700C448 383.800 368.200 304 269.700 304H178.300z"/></svg>
<span class="t" style="left:1771.00px;top:48.97px;font-size:25.2px;color:#eef1f5;letter-spacing:0.602px;-webkit-text-stroke:0.4px #eef1f5;">Profile</span>
<div style="left:2556px;top:22px;width:560px;height:82px;border-radius:16px;background:rgba(255,255,255,.075);border:2px solid rgba(255,255,255,.22);box-sizing:border-box"></div>
<svg class="ic" style="left:2589px;top:47.2px;width:28.5px;height:28.5px;" viewBox="0 0 512 512" preserveAspectRatio="xMidYMid meet"><path fill="#c4cddb" fill-rule="nonzero" d="M416 208c0 45.900-14.900 88.300-40 122.700L502.600 457.400c12.500 12.500 12.500 32.800 0 45.300s-32.800 12.500-45.300 0L330.700 376c-34.400 25.200-76.800 40-122.700 40C93.100 416 0 322.900 0 208S93.100 0 208 0S416 93.100 416 208zM208 352a144 144 0 1 0 0-288 144 144 0 1 0 0 288z"/></svg>
<div style="left:2640px;top:36px;width:348px;height:56px;overflow:hidden"><span class="t" style="left:1.40px;top:12.60px;font-size:28px;color:#8fa0be;letter-spacing:-0.753px;">Search orders, products, dealers...</span></div>
<div style="left:3002px;top:40px;width:84px;height:46px;background:rgba(255,255,255,.20);border:2px solid rgba(255,255,255,.30);box-sizing:border-box"></div>
<span class="t" style="left:3013.00px;top:51.58px;font-size:22px;color:#e6ebf2;letter-spacing:-0.412px;">Ctrl+K</span>
<div style="left:3158px;top:24px;width:80px;height:80px;border-radius:18px;background:rgba(255,255,255,.075);border:2px solid rgba(255,255,255,.18);box-sizing:border-box"></div>
<div style="left:3280px;top:24px;width:80px;height:80px;border-radius:18px;background:rgba(255,255,255,.075);border:2px solid rgba(255,255,255,.18);box-sizing:border-box"></div>
<svg class="ic" style="left:3177.6px;top:45.4px;width:36.2px;height:32.4px;" viewBox="0 0 576 512" preserveAspectRatio="xMidYMid meet"><path fill="#ffffff" fill-rule="nonzero" d="M0 24C0 10.700 10.700 0 24 0H69.500c22 0 41.500 12.800 50.600 32h411c26.300 0 45.500 25 38.600 50.400l-41 152.300c-8.500 31.400-37 53.300-69.500 53.300H170.700l5.400 28.500c2.200 11.300 12.100 19.500 23.600 19.500H488c13.300 0 24 10.700 24 24s-10.700 24-24 24H199.700c-34.600 0-64.300-24.600-70.700-58.500L77.400 54.500c-.7-3.800-4-6.500-7.900-6.500H24C10.700 48 0 37.300 0 24zM128 464a48 48 0 1 1 96 0 48 48 0 1 1 -96 0zm336-48a48 48 0 1 1 0 96 48 48 0 1 1 0-96z"/></svg>
<svg class="ic" style="left:3305.8px;top:45.8px;width:28.3px;height:32.3px;" viewBox="0 0 448 512" preserveAspectRatio="xMidYMid meet"><path fill="#ffffff" fill-rule="nonzero" d="M224 0c-17.700 0-32 14.300-32 32V51.200C119 66 64 130.600 64 208v18.800c0 47-17.300 92.400-48.500 127.600l-7.400 8.300c-8.400 9.400-10.400 22.900-5.300 34.400S19.400 416 32 416H416c12.600 0 24-7.400 29.200-18.900s3.100-25-5.300-34.400l-7.400-8.300C401.300 319.200 384 273.900 384 226.800V208c0-77.400-55-142-128-156.800V32c0-17.700-14.300-32-32-32zm45.300 493.300c12-12 18.700-28.300 18.700-45.300H224 160c0 17 6.700 33.300 18.700 45.300s28.300 18.700 45.300 18.700s33.300-6.700 45.300-18.700z"/></svg>
<div style="left:3327px;top:22.5px;width:34.5px;height:34.5px;border-radius:50%;background:#ef4444;border:3px solid #121226;box-sizing:border-box"></div>
<span class="t" style="left:3338.60px;top:29.68px;font-size:16.8px;color:#ffffff;font-weight:700;">4</span>
<div style="left:3416px;top:28px;width:72px;height:72px;border-radius:20px;background:linear-gradient(135deg,#d8b66e 0%,#bd964d 100%);box-shadow:0 4px 12px rgba(201,169,97,.20)"></div>
<span class="t" style="left:3435.60px;top:50.54px;font-size:22.4px;color:#111111;font-weight:700;letter-spacing:-0.016px;">GU</span>
<span class="t" style="left:3508.00px;top:34.96px;font-size:24.5px;color:#ffffff;letter-spacing:0.007px;-webkit-text-stroke:0.83px #ffffff;">Guest User</span>
<span class="t" style="left:3508.00px;top:70.69px;font-size:18.2px;color:#c9a961;letter-spacing:1.185px;-webkit-text-stroke:0.3px #c9a961;">NOT AUTHENTICATED</span>
<svg class="ic" style="left:3760px;top:50px;width:22px;height:22px;" viewBox="0 0 512 512" preserveAspectRatio="xMidYMid meet"><path fill="#9fb0cc" fill-rule="nonzero" d="M233.400 406.600c12.500 12.500 32.800 12.500 45.300 0l192-192c12.500-12.500 12.500-32.800 0-45.300s-32.800-12.500-45.300 0L256 338.700 86.600 169.400c-12.500-12.500-32.800-12.500-45.300 0s-12.500 32.800 0 45.300l192 192z"/></svg>
</header>
<script>(function(){var w=window.innerWidth;if(w&&Math.abs(w-3840)>4){document.documentElement.style.zoom=w/3840;}})();</script>
</body></html>
